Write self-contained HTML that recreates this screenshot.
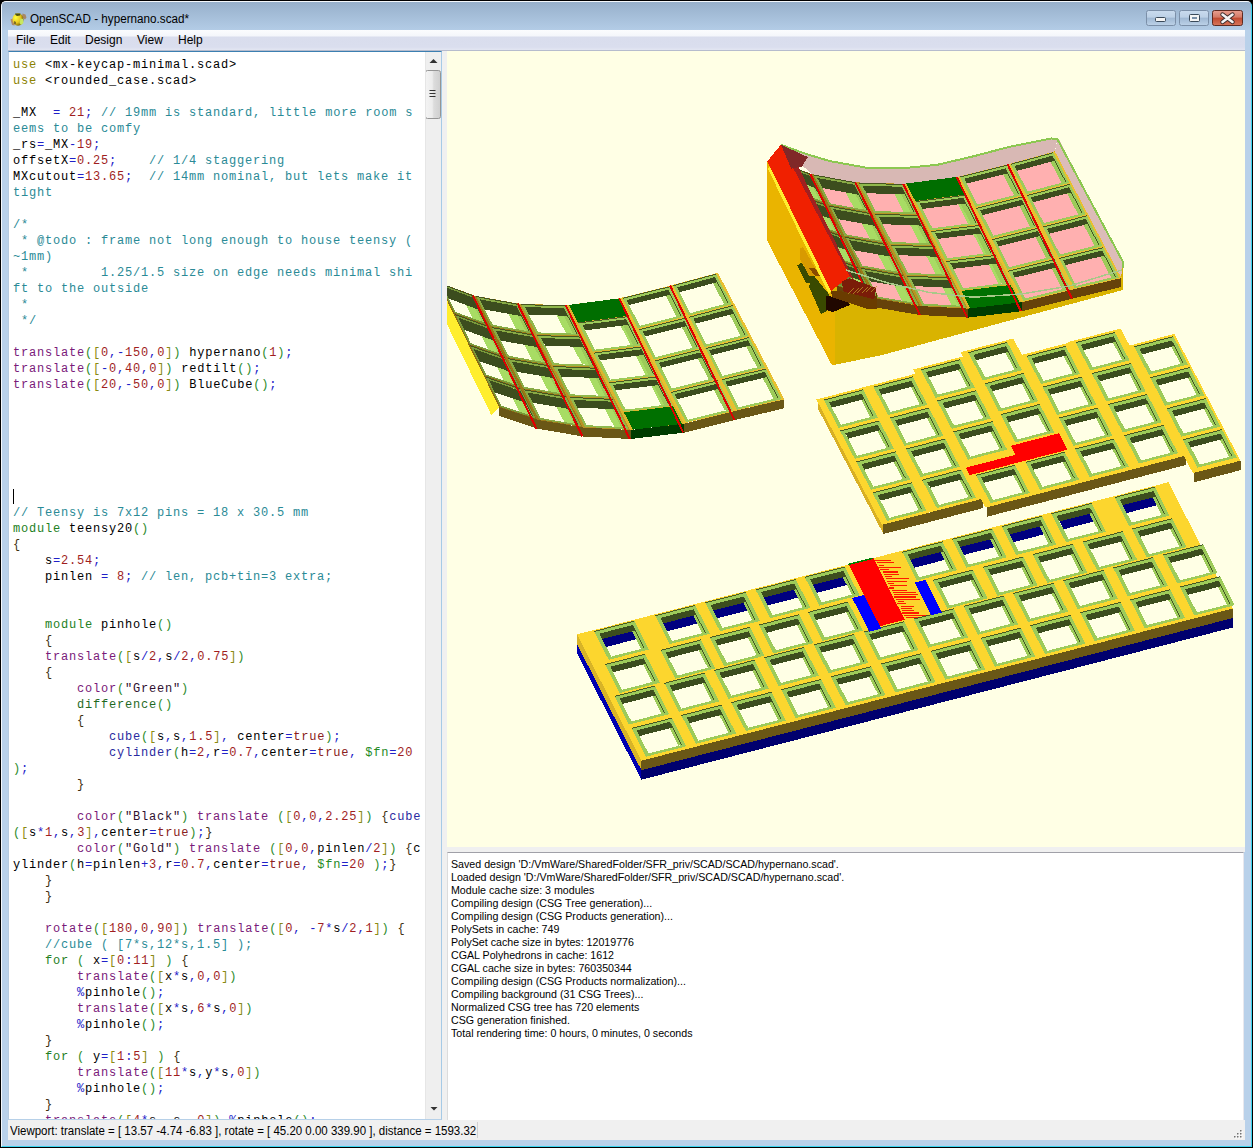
<!DOCTYPE html>
<html><head><meta charset="utf-8"><style>
*{margin:0;padding:0;box-sizing:border-box}
html,body{width:1253px;height:1148px;overflow:hidden;background:#000}
body{position:relative;font-family:"Liberation Sans",sans-serif}
.abs{position:absolute}
#frame{left:1px;top:1px;width:1251px;height:1146px;background:#b9d1ea;border-radius:5px 5px 0 0;border-right:1px solid #3ad4f0;border-bottom:1px solid #3ad4f0;border-left:1px solid #f4f8fc;border-top:1px solid #f4f8fc}
#title{left:2px;top:2px;width:1249px;height:28px;background:linear-gradient(#97b0cb,#b3cce6);border-radius:4px 4px 0 0}
#ttext{left:30px;top:12px;font-size:12.5px;color:#000;white-space:pre;transform:scaleX(0.934);transform-origin:0 0}
#menu{left:8px;top:30px;width:1237px;height:20px;background:linear-gradient(#fbfcfe 0,#f4f6fb 30%,#d9dded 35%,#dadeee 85%,#e3e6f2 100%)}
.mi{position:absolute;top:3px;font-size:12px;color:#000}
#editor{left:8px;top:51px;width:434px;height:1069px;background:#fff;border-top:1px solid #3c7fb1;border-left:1px solid #b6cbe0;border-right:1px solid #a6cae6;border-bottom:1px solid #b6d0e8;overflow:hidden}
#code{left:4px;top:5px;width:420px;height:1070px;font-family:"Liberation Mono",monospace;font-size:12px;letter-spacing:0.8px;color:#000}
.ln{position:absolute;left:0;height:16px;line-height:16px;white-space:pre}
.cur{display:inline-block;width:1px;height:15px;background:#000;vertical-align:top;margin-top:0}
#vsb{left:416px;top:0px;width:17px;height:1067px;background:#efefef;border-left:1px solid #e6e6e6}
#split{left:442px;top:51px;width:5px;height:1069px;background:#f0f0f0}
#view{left:447px;top:51px;width:798px;height:796px;background:#ffffe5;overflow:hidden}
#gap{left:447px;top:847px;width:798px;height:5px;background:#f0f0f0}
#console{left:447px;top:852px;width:797px;height:268px;background:#fff;border-top:1px solid #a0a0a8;border-left:1px solid #dcdcdc;border-right:1px solid #e8e8ee}
#ctext{left:3px;top:5px;font-size:11.5px;color:#000;transform:scaleX(0.926);transform-origin:0 0}
.cl{position:absolute;left:0;white-space:pre;line-height:13px;height:13px}
#status{left:8px;top:1120px;width:1237px;height:20px;background:#f0f0f0}
#stext{left:2px;top:4px;font-size:12px;white-space:pre;transform:scaleX(0.957);transform-origin:0 0}
</style></head><body>
<div class="abs" id="frame"></div>
<div class="abs" id="title"></div>
<div class="abs" id="ticon" style="left:10px;top:12px;width:17px;height:13px">
<svg width="17" height="13" viewBox="0 0 17 13"><defs><radialGradient id="ig" cx=".3" cy=".35" r=".7"><stop offset="0" stop-color="#ffff40"/><stop offset=".6" stop-color="#e8c820"/><stop offset="1" stop-color="#806800"/></radialGradient></defs>
<path d="M0.5 6.5 L3 5.5 L5 8 L4.5 12.5 L2 12 Z" fill="#b08a68"/>
<path d="M12.5 0.5 L15.5 1.5 L16.5 4.5 L15 6.5 L12 4 Z" fill="#a88868"/>
<ellipse cx="8" cy="6.5" rx="5.5" ry="6.2" fill="url(#ig)"/>
<path d="M5 0.5 L10.5 0.5 L10 2.5 L7 3 L5.5 2 Z" fill="#4a5010"/>
<path d="M10.5 5.5 L13 6 L13.5 10 L11 12 L9.5 10 Z" fill="#c8e860"/>
<path d="M4 8 L6 9 L6 11 L4 11 Z" fill="#807020"/>
</svg>
</div>
<div class="abs" id="ttext">OpenSCAD - hypernano.scad*</div>
<!-- caption buttons -->
<svg class="abs" style="left:1145px;top:9px" width="100" height="19" viewBox="0 0 100 19">
<defs>
<linearGradient id="gb" x1="0" y1="0" x2="0" y2="1"><stop offset="0" stop-color="#c9dbee"/><stop offset=".45" stop-color="#bcd0e6"/><stop offset=".5" stop-color="#9fb8d3"/><stop offset="1" stop-color="#bdd2e8"/></linearGradient>
<linearGradient id="gr" x1="0" y1="0" x2="0" y2="1"><stop offset="0" stop-color="#e8a090"/><stop offset=".45" stop-color="#d47a66"/><stop offset=".5" stop-color="#c04a30"/><stop offset="1" stop-color="#d8765a"/></linearGradient>
</defs>
<rect x="1.5" y="1.5" width="29" height="15" rx="2" fill="url(#gb)" stroke="#7b8fa8"/>
<rect x="10.5" y="8.5" width="10" height="4" rx="1" fill="#f4f4f4" stroke="#3a4a5a"/>
<rect x="34.5" y="1.5" width="29" height="15" rx="2" fill="url(#gb)" stroke="#7b8fa8"/>
<rect x="44.5" y="5.5" width="10" height="7" rx="1" fill="#f4f4f4" stroke="#3a4a5a"/><rect x="47" y="8" width="5" height="2" fill="#7a90a8"/>
<rect x="67.5" y="1.5" width="30" height="15" rx="2" fill="url(#gr)" stroke="#5e2a20"/>
<path d="M77.5 5.5 L87.5 13 M87.5 5.5 L77.5 13" stroke="#3a2a2a" stroke-width="4.4" stroke-linecap="round"/>
<path d="M77.5 5.5 L87.5 13 M87.5 5.5 L77.5 13" stroke="#f4f4f4" stroke-width="2.6" stroke-linecap="round"/>
</svg>
<div class="abs" id="menu">
<span class="mi" style="left:8px">File</span>
<span class="mi" style="left:42px">Edit</span>
<span class="mi" style="left:77px">Design</span>
<span class="mi" style="left:129px">View</span>
<span class="mi" style="left:170px">Help</span>
</div>
<div class="abs" id="editor">
<div class="abs" id="code">
<div class="ln" style="top:0px"><span style="color:#8c8200">use</span> &lt;mx-keycap-minimal.scad&gt;</div>
<div class="ln" style="top:16px"><span style="color:#8c8200">use</span> &lt;rounded_case.scad&gt;</div>
<div class="ln" style="top:32px"></div>
<div class="ln" style="top:48px">_MX  <span style="color:#2020c8">=</span> <span style="color:#a01e1e">21</span><span style="color:#2020c8">;</span> <span style="color:#2a8a96">// 19mm is standard, little more room s</span></div>
<div class="ln" style="top:64px"><span style="color:#2a8a96">eems to be comfy</span></div>
<div class="ln" style="top:80px">_rs<span style="color:#2020c8">=</span>_MX<span style="color:#2020c8">-</span><span style="color:#a01e1e">19</span><span style="color:#2020c8">;</span></div>
<div class="ln" style="top:96px">offsetX<span style="color:#2020c8">=</span><span style="color:#a01e1e">0.25</span><span style="color:#2020c8">;</span>    <span style="color:#2a8a96">// 1/4 staggering</span></div>
<div class="ln" style="top:112px">MXcutout<span style="color:#2020c8">=</span><span style="color:#a01e1e">13.65</span><span style="color:#2020c8">;</span>  <span style="color:#2a8a96">// 14mm nominal, but lets make it</span></div>
<div class="ln" style="top:128px"><span style="color:#2a8a96">tight</span></div>
<div class="ln" style="top:144px"></div>
<div class="ln" style="top:160px"><span style="color:#2a8a96">/*</span></div>
<div class="ln" style="top:176px"><span style="color:#2a8a96"> * @todo : frame not long enough to house teensy (</span></div>
<div class="ln" style="top:192px"><span style="color:#2a8a96">~1mm)</span></div>
<div class="ln" style="top:208px"><span style="color:#2a8a96"> *         1.25/1.5 size on edge needs minimal shi</span></div>
<div class="ln" style="top:224px"><span style="color:#2a8a96">ft to the outside</span></div>
<div class="ln" style="top:240px"><span style="color:#2a8a96"> *</span></div>
<div class="ln" style="top:256px"><span style="color:#2a8a96"> */</span></div>
<div class="ln" style="top:272px"></div>
<div class="ln" style="top:288px"><span style="color:#7a1a7a">translate</span><span style="color:#2a8a2a">(</span><span style="color:#8a8a10">[</span><span style="color:#a01e1e">0</span><span style="color:#2020c8">,</span><span style="color:#2020c8">-</span><span style="color:#a01e1e">150</span><span style="color:#2020c8">,</span><span style="color:#a01e1e">0</span><span style="color:#8a8a10">]</span><span style="color:#2a8a2a">)</span> hypernano<span style="color:#2a8a2a">(</span><span style="color:#a01e1e">1</span><span style="color:#2a8a2a">)</span><span style="color:#2020c8">;</span></div>
<div class="ln" style="top:304px"><span style="color:#7a1a7a">translate</span><span style="color:#2a8a2a">(</span><span style="color:#8a8a10">[</span><span style="color:#2020c8">-</span><span style="color:#a01e1e">0</span><span style="color:#2020c8">,</span><span style="color:#a01e1e">40</span><span style="color:#2020c8">,</span><span style="color:#a01e1e">0</span><span style="color:#8a8a10">]</span><span style="color:#2a8a2a">)</span> redtilt<span style="color:#2a8a2a">(</span><span style="color:#2a8a2a">)</span><span style="color:#2020c8">;</span></div>
<div class="ln" style="top:320px"><span style="color:#7a1a7a">translate</span><span style="color:#2a8a2a">(</span><span style="color:#8a8a10">[</span><span style="color:#a01e1e">20</span><span style="color:#2020c8">,</span><span style="color:#2020c8">-</span><span style="color:#a01e1e">50</span><span style="color:#2020c8">,</span><span style="color:#a01e1e">0</span><span style="color:#8a8a10">]</span><span style="color:#2a8a2a">)</span> BlueCube<span style="color:#2a8a2a">(</span><span style="color:#2a8a2a">)</span><span style="color:#2020c8">;</span></div>
<div class="ln" style="top:336px"></div>
<div class="ln" style="top:352px"></div>
<div class="ln" style="top:368px"></div>
<div class="ln" style="top:384px"></div>
<div class="ln" style="top:400px"></div>
<div class="ln" style="top:416px"></div>
<div class="ln" style="top:432px"><span class="cur"></span></div>
<div class="ln" style="top:448px"><span style="color:#2a8a96">// Teensy is 7x12 pins = 18 x 30.5 mm</span></div>
<div class="ln" style="top:464px"><span style="color:#238023">module</span> teensy20<span style="color:#2a8a2a">(</span><span style="color:#2a8a2a">)</span></div>
<div class="ln" style="top:480px"><span style="color:#403010">{</span></div>
<div class="ln" style="top:496px">    s<span style="color:#2020c8">=</span><span style="color:#a01e1e">2.54</span><span style="color:#2020c8">;</span></div>
<div class="ln" style="top:512px">    pinlen <span style="color:#2020c8">=</span> <span style="color:#a01e1e">8</span><span style="color:#2020c8">;</span> <span style="color:#2a8a96">// len, pcb+tin=3 extra;</span></div>
<div class="ln" style="top:528px"></div>
<div class="ln" style="top:544px"></div>
<div class="ln" style="top:560px">    <span style="color:#238023">module</span> pinhole<span style="color:#2a8a2a">(</span><span style="color:#2a8a2a">)</span></div>
<div class="ln" style="top:576px">    <span style="color:#403010">{</span></div>
<div class="ln" style="top:592px">    <span style="color:#7a1a7a">translate</span><span style="color:#2a8a2a">(</span><span style="color:#8a8a10">[</span>s<span style="color:#2020c8">/</span><span style="color:#a01e1e">2</span><span style="color:#2020c8">,</span>s<span style="color:#2020c8">/</span><span style="color:#a01e1e">2</span><span style="color:#2020c8">,</span><span style="color:#a01e1e">0.75</span><span style="color:#8a8a10">]</span><span style="color:#2a8a2a">)</span></div>
<div class="ln" style="top:608px">    <span style="color:#403010">{</span></div>
<div class="ln" style="top:624px">        <span style="color:#7a1a7a">color</span><span style="color:#2a8a2a">(</span><span style="color:#301030">&quot;Green&quot;</span><span style="color:#2a8a2a">)</span></div>
<div class="ln" style="top:640px">        <span style="color:#1f6a1f">difference</span><span style="color:#2a8a2a">(</span><span style="color:#2a8a2a">)</span></div>
<div class="ln" style="top:656px">        <span style="color:#403010">{</span></div>
<div class="ln" style="top:672px">            <span style="color:#2a2aa0">cube</span><span style="color:#2a8a2a">(</span><span style="color:#8a8a10">[</span>s<span style="color:#2020c8">,</span>s<span style="color:#2020c8">,</span><span style="color:#a01e1e">1.5</span><span style="color:#8a8a10">]</span><span style="color:#2020c8">,</span> center<span style="color:#2020c8">=</span><span style="color:#8a2020">true</span><span style="color:#2a8a2a">)</span><span style="color:#2020c8">;</span></div>
<div class="ln" style="top:688px">            <span style="color:#2a2aa0">cylinder</span><span style="color:#2a8a2a">(</span>h<span style="color:#2020c8">=</span><span style="color:#a01e1e">2</span><span style="color:#2020c8">,</span>r<span style="color:#2020c8">=</span><span style="color:#a01e1e">0.7</span><span style="color:#2020c8">,</span>center<span style="color:#2020c8">=</span><span style="color:#8a2020">true</span><span style="color:#2020c8">,</span> <span style="color:#248a24">$fn</span><span style="color:#2020c8">=</span><span style="color:#a01e1e">20</span></div>
<div class="ln" style="top:704px"><span style="color:#2a8a2a">)</span><span style="color:#2020c8">;</span></div>
<div class="ln" style="top:720px">        <span style="color:#403010">}</span></div>
<div class="ln" style="top:736px"></div>
<div class="ln" style="top:752px">        <span style="color:#7a1a7a">color</span><span style="color:#2a8a2a">(</span><span style="color:#301030">&quot;Black&quot;</span><span style="color:#2a8a2a">)</span> <span style="color:#7a1a7a">translate</span> <span style="color:#2a8a2a">(</span><span style="color:#8a8a10">[</span><span style="color:#a01e1e">0</span><span style="color:#2020c8">,</span><span style="color:#a01e1e">0</span><span style="color:#2020c8">,</span><span style="color:#a01e1e">2.25</span><span style="color:#8a8a10">]</span><span style="color:#2a8a2a">)</span> <span style="color:#403010">{</span><span style="color:#2a2aa0">cube</span></div>
<div class="ln" style="top:768px"><span style="color:#2a8a2a">(</span><span style="color:#8a8a10">[</span>s<span style="color:#2020c8">*</span><span style="color:#a01e1e">1</span><span style="color:#2020c8">,</span>s<span style="color:#2020c8">,</span><span style="color:#a01e1e">3</span><span style="color:#8a8a10">]</span><span style="color:#2020c8">,</span>center<span style="color:#2020c8">=</span><span style="color:#8a2020">true</span><span style="color:#2a8a2a">)</span><span style="color:#2020c8">;</span><span style="color:#403010">}</span></div>
<div class="ln" style="top:784px">        <span style="color:#7a1a7a">color</span><span style="color:#2a8a2a">(</span><span style="color:#301030">&quot;Gold&quot;</span><span style="color:#2a8a2a">)</span> <span style="color:#7a1a7a">translate</span> <span style="color:#2a8a2a">(</span><span style="color:#8a8a10">[</span><span style="color:#a01e1e">0</span><span style="color:#2020c8">,</span><span style="color:#a01e1e">0</span><span style="color:#2020c8">,</span>pinlen<span style="color:#2020c8">/</span><span style="color:#a01e1e">2</span><span style="color:#8a8a10">]</span><span style="color:#2a8a2a">)</span> <span style="color:#403010">{</span>c</div>
<div class="ln" style="top:800px">ylinder<span style="color:#2a8a2a">(</span>h<span style="color:#2020c8">=</span>pinlen<span style="color:#2020c8">+</span><span style="color:#a01e1e">3</span><span style="color:#2020c8">,</span>r<span style="color:#2020c8">=</span><span style="color:#a01e1e">0.7</span><span style="color:#2020c8">,</span>center<span style="color:#2020c8">=</span><span style="color:#8a2020">true</span><span style="color:#2020c8">,</span> <span style="color:#248a24">$fn</span><span style="color:#2020c8">=</span><span style="color:#a01e1e">20</span> <span style="color:#2a8a2a">)</span><span style="color:#2020c8">;</span><span style="color:#403010">}</span></div>
<div class="ln" style="top:816px">    <span style="color:#403010">}</span></div>
<div class="ln" style="top:832px">    <span style="color:#403010">}</span></div>
<div class="ln" style="top:848px"></div>
<div class="ln" style="top:864px">    <span style="color:#7a1a7a">rotate</span><span style="color:#2a8a2a">(</span><span style="color:#8a8a10">[</span><span style="color:#a01e1e">180</span><span style="color:#2020c8">,</span><span style="color:#a01e1e">0</span><span style="color:#2020c8">,</span><span style="color:#a01e1e">90</span><span style="color:#8a8a10">]</span><span style="color:#2a8a2a">)</span> <span style="color:#7a1a7a">translate</span><span style="color:#2a8a2a">(</span><span style="color:#8a8a10">[</span><span style="color:#a01e1e">0</span><span style="color:#2020c8">,</span> <span style="color:#2020c8">-</span><span style="color:#a01e1e">7</span><span style="color:#2020c8">*</span>s<span style="color:#2020c8">/</span><span style="color:#a01e1e">2</span><span style="color:#2020c8">,</span><span style="color:#a01e1e">1</span><span style="color:#8a8a10">]</span><span style="color:#2a8a2a">)</span> <span style="color:#403010">{</span></div>
<div class="ln" style="top:880px">    <span style="color:#2a8a96">//cube ( [7*s,12*s,1.5] );</span></div>
<div class="ln" style="top:896px">    <span style="color:#238023">for</span> <span style="color:#2a8a2a">(</span> x<span style="color:#2020c8">=</span><span style="color:#8a8a10">[</span><span style="color:#a01e1e">0</span><span style="color:#2020c8">:</span><span style="color:#a01e1e">11</span><span style="color:#8a8a10">]</span> <span style="color:#2a8a2a">)</span> <span style="color:#403010">{</span></div>
<div class="ln" style="top:912px">        <span style="color:#7a1a7a">translate</span><span style="color:#2a8a2a">(</span><span style="color:#8a8a10">[</span>x<span style="color:#2020c8">*</span>s<span style="color:#2020c8">,</span><span style="color:#a01e1e">0</span><span style="color:#2020c8">,</span><span style="color:#a01e1e">0</span><span style="color:#8a8a10">]</span><span style="color:#2a8a2a">)</span></div>
<div class="ln" style="top:928px">        <span style="color:#2020c8">%</span>pinhole<span style="color:#2a8a2a">(</span><span style="color:#2a8a2a">)</span><span style="color:#2020c8">;</span></div>
<div class="ln" style="top:944px">        <span style="color:#7a1a7a">translate</span><span style="color:#2a8a2a">(</span><span style="color:#8a8a10">[</span>x<span style="color:#2020c8">*</span>s<span style="color:#2020c8">,</span><span style="color:#a01e1e">6</span><span style="color:#2020c8">*</span>s<span style="color:#2020c8">,</span><span style="color:#a01e1e">0</span><span style="color:#8a8a10">]</span><span style="color:#2a8a2a">)</span></div>
<div class="ln" style="top:960px">        <span style="color:#2020c8">%</span>pinhole<span style="color:#2a8a2a">(</span><span style="color:#2a8a2a">)</span><span style="color:#2020c8">;</span></div>
<div class="ln" style="top:976px">    <span style="color:#403010">}</span></div>
<div class="ln" style="top:992px">    <span style="color:#238023">for</span> <span style="color:#2a8a2a">(</span> y<span style="color:#2020c8">=</span><span style="color:#8a8a10">[</span><span style="color:#a01e1e">1</span><span style="color:#2020c8">:</span><span style="color:#a01e1e">5</span><span style="color:#8a8a10">]</span> <span style="color:#2a8a2a">)</span> <span style="color:#403010">{</span></div>
<div class="ln" style="top:1008px">        <span style="color:#7a1a7a">translate</span><span style="color:#2a8a2a">(</span><span style="color:#8a8a10">[</span><span style="color:#a01e1e">11</span><span style="color:#2020c8">*</span>s<span style="color:#2020c8">,</span>y<span style="color:#2020c8">*</span>s<span style="color:#2020c8">,</span><span style="color:#a01e1e">0</span><span style="color:#8a8a10">]</span><span style="color:#2a8a2a">)</span></div>
<div class="ln" style="top:1024px">        <span style="color:#2020c8">%</span>pinhole<span style="color:#2a8a2a">(</span><span style="color:#2a8a2a">)</span><span style="color:#2020c8">;</span></div>
<div class="ln" style="top:1040px">    <span style="color:#403010">}</span></div>
<div class="ln" style="top:1056px">    <span style="color:#7a1a7a">translate</span><span style="color:#2a8a2a">(</span><span style="color:#8a8a10">[</span><span style="color:#a01e1e">4</span><span style="color:#2020c8">*</span>s<span style="color:#2020c8">,</span> s<span style="color:#2020c8">,</span> <span style="color:#a01e1e">0</span><span style="color:#8a8a10">]</span><span style="color:#2a8a2a">)</span> <span style="color:#2020c8">%</span>pinhole<span style="color:#2a8a2a">(</span><span style="color:#2a8a2a">)</span><span style="color:#2020c8">;</span></div>
</div>
<div class="abs" id="vsb">
<svg class="abs" style="left:0;top:0" width="16" height="1067" viewBox="0 0 16 1067">
<path d="M3.5 11 L7.5 7 L11.5 11 Z" fill="#333"/>
<defs><linearGradient id="thumb" x1="0" y1="0" x2="1" y2="0"><stop offset="0" stop-color="#f4f4f4"/><stop offset=".45" stop-color="#ececec"/><stop offset=".55" stop-color="#dcdcdc"/><stop offset="1" stop-color="#cfcfcf"/></linearGradient></defs>
<rect x="-0.5" y="18.5" width="15" height="48" rx="2" fill="url(#thumb)" stroke="#959595"/>
<path d="M3.5 38.5h6M3.5 41.5h6M3.5 44.5h6" stroke="#333" stroke-width="1.2"/>
<path d="M4.5 1055 L8 1058.5 L11.5 1055 Z" fill="#333"/>
</svg>
</div>
</div>
<div class="abs" id="split"></div>
<div class="abs" style="left:8px;top:50px;width:1237px;height:1px;background:#b6bccd"></div>
<div class="abs" id="view">
<svg class="abs" style="left:0;top:0" width="798" height="796" viewBox="447 51 798 796" shape-rendering="crispEdges"><polygon points="767.3,161.3 767.3,241.0 832.0,365.4 882.0,355.0 1123.0,290.0 1123.0,266.0 1054.9,151.4 1008.5,164.1 957.7,176.8 904.2,183.8 856.3,182.4 811.3,174.0 775.5,160.6" fill="#d9b300"/><polygon points="767.3,161.3 767.3,241.0 832.0,365.4 835.0,365.4 835.0,303.0 831.0,290.9" fill="#eab400"/><polygon points="797.2,265.4 801.5,262.9 810.0,275.1 812.4,273.9 828.3,293.4 832.0,308.0 821.0,314.1 808.8,286.1 811.2,283.7 805.7,282.4" fill="#3a4a00"/><polygon points="799.6,249.0 803.0,247.0 815.0,268.0 814.9,275.4 809.0,276.0 799.6,258.0" fill="#d89a00"/><polygon points="809.0,268.0 815.0,268.0 820.0,276.0 815.0,276.0" fill="#8a4a00"/><polygon points="826.0,296.0 845.0,298.0 850.0,305.0 833.0,312.0 826.0,310.0" fill="#200800"/><polygon points="836.5,285.6 875.0,298.4 875.0,307.4 836.5,294.6" fill="#66420a"/><polygon points="875.0,298.4 920.9,306.1 920.9,315.1 875.0,307.4" fill="#66420a"/><polygon points="920.9,306.1 968.2,308.6 968.2,317.6 920.9,315.1" fill="#66420a"/><polygon points="968.2,308.6 1021.8,302.2 1021.8,311.2 968.2,317.6" fill="#003c00"/><polygon points="1021.8,302.2 1072.9,289.5 1072.9,298.5 1021.8,311.2" fill="#66420a"/><polygon points="1072.9,289.5 1121.4,278.0 1121.4,287.0 1072.9,298.5" fill="#66420a"/><polygon points="775.0,160.6 811.8,174.0 875.5,298.4 836.0,285.6" fill="#8a6a14"/><polygon points="810.8,174.0 856.8,182.4 921.4,306.1 874.5,298.4" fill="#9a7a18"/><polygon points="855.8,182.4 904.7,183.8 968.7,308.6 920.4,306.1" fill="#b89424"/><polygon points="903.7,183.8 958.2,176.8 1022.3,302.2 967.7,308.6" fill="#dcb42c"/><polygon points="957.2,176.8 1009.0,164.1 1073.4,289.5 1021.3,302.2" fill="#e8c030"/><polygon points="1008.0,164.1 1055.4,151.4 1121.9,278.0 1072.4,289.5" fill="#e8c030"/><polygon points="777.3,161.9 810.2,174.2 825.4,203.8 791.8,191.6" fill="#7a9a3a"/><polygon points="780.4,165.0 809.5,175.8 822.5,201.3 793.0,190.6" fill="#6a8a30"/><polygon points="797.3,171.3 806.6,174.8 819.5,200.2 810.1,196.8" fill="#a8dc64"/><polygon points="806.6,174.8 809.5,175.8 822.5,201.3 819.5,200.2" fill="#9dcb5a"/><polygon points="780.4,165.0 809.5,175.8 815.7,188.1 786.5,177.3" fill="#3c4d1e"/><line x1="809.5" y1="175.8" x2="822.5" y2="201.3" stroke="#3c4d1e" stroke-width="0.9"/><line x1="777.3" y1="161.9" x2="810.2" y2="174.2" stroke="#3c4d1e" stroke-width="0.9"/><polygon points="792.6,193.1 826.1,205.3 841.3,234.9 807.1,222.9" fill="#7a9a3a"/><polygon points="795.8,196.2 825.3,207.0 838.3,232.4 808.3,221.8" fill="#6a8a30"/><polygon points="812.9,202.5 822.4,205.9 835.3,231.4 825.7,228.0" fill="#a8dc64"/><polygon points="822.4,205.9 825.3,207.0 838.3,232.4 835.3,231.4" fill="#9dcb5a"/><polygon points="795.8,196.2 825.3,207.0 831.6,219.2 801.8,208.5" fill="#3c4d1e"/><line x1="825.3" y1="207.0" x2="838.3" y2="232.4" stroke="#3c4d1e" stroke-width="0.9"/><line x1="792.6" y1="193.1" x2="826.1" y2="205.3" stroke="#3c4d1e" stroke-width="0.9"/><polygon points="807.9,224.4 842.0,236.4 857.2,266.0 822.4,254.1" fill="#7a9a3a"/><polygon points="811.1,227.5 841.2,238.1 854.2,263.5 823.6,253.0" fill="#6a8a30"/><polygon points="828.5,233.6 838.2,237.0 851.1,262.5 841.3,259.1" fill="#a8dc64"/><polygon points="838.2,237.0 841.2,238.1 854.2,263.5 851.1,262.5" fill="#9dcb5a"/><polygon points="811.1,227.5 841.2,238.1 847.4,250.3 817.1,239.8" fill="#3c4d1e"/><line x1="841.2" y1="238.1" x2="854.2" y2="263.5" stroke="#3c4d1e" stroke-width="0.9"/><line x1="807.9" y1="224.4" x2="842.0" y2="236.4" stroke="#3c4d1e" stroke-width="0.9"/><polygon points="823.1,255.6 857.9,267.5 873.1,297.1 837.7,285.4" fill="#7a9a3a"/><polygon points="826.4,258.7 857.1,269.2 870.0,294.7 838.9,284.3" fill="#6a8a30"/><polygon points="844.2,264.8 854.0,268.1 866.9,293.6 857.0,290.3" fill="#a8dc64"/><polygon points="854.0,268.1 857.1,269.2 870.0,294.7 866.9,293.6" fill="#9dcb5a"/><polygon points="826.4,258.7 857.1,269.2 863.3,281.4 832.4,271.0" fill="#3c4d1e"/><line x1="857.1" y1="269.2" x2="870.0" y2="294.7" stroke="#3c4d1e" stroke-width="0.9"/><line x1="823.1" y1="255.6" x2="857.9" y2="267.5" stroke="#3c4d1e" stroke-width="0.9"/><polygon points="813.5,175.1 854.9,182.8 870.3,212.3 828.7,204.7" fill="#88aa44"/><polygon points="817.2,177.9 853.6,184.7 866.8,210.0 830.2,203.4" fill="#ffb0b0"/><polygon points="840.5,182.3 850.0,184.0 863.2,209.4 853.7,207.6" fill="#a8dc64"/><polygon points="850.0,184.0 853.6,184.7 866.8,210.0 863.2,209.4" fill="#9dcb5a"/><polygon points="817.2,177.9 853.6,184.7 858.9,194.8 822.4,188.1" fill="#3c4d1e"/><line x1="853.6" y1="184.7" x2="866.8" y2="210.0" stroke="#3c4d1e" stroke-width="0.9"/><line x1="813.5" y1="175.1" x2="854.9" y2="182.8" stroke="#3c4d1e" stroke-width="0.9"/><polygon points="829.4,206.2 871.0,213.7 886.4,243.2 844.6,235.8" fill="#88aa44"/><polygon points="833.1,209.0 869.8,215.6 883.0,241.0 846.2,234.4" fill="#ffb0b0"/><polygon points="856.6,213.2 866.1,215.0 879.3,240.3 869.7,238.6" fill="#a8dc64"/><polygon points="866.1,215.0 869.8,215.6 883.0,241.0 879.3,240.3" fill="#9dcb5a"/><polygon points="833.1,209.0 869.8,215.6 875.0,225.8 838.3,219.2" fill="#3c4d1e"/><line x1="869.8" y1="215.6" x2="883.0" y2="241.0" stroke="#3c4d1e" stroke-width="0.9"/><line x1="829.4" y1="206.2" x2="871.0" y2="213.7" stroke="#3c4d1e" stroke-width="0.9"/><polygon points="845.4,237.3 887.2,244.7 902.5,274.1 860.5,266.9" fill="#88aa44"/><polygon points="849.1,240.1 885.9,246.6 899.1,271.9 862.1,265.5" fill="#ffb0b0"/><polygon points="872.6,244.2 882.2,245.9 895.4,271.3 885.8,269.6" fill="#a8dc64"/><polygon points="882.2,245.9 885.9,246.6 899.1,271.9 895.4,271.3" fill="#9dcb5a"/><polygon points="849.1,240.1 885.9,246.6 891.2,256.7 854.3,250.3" fill="#3c4d1e"/><line x1="885.9" y1="246.6" x2="899.1" y2="271.9" stroke="#3c4d1e" stroke-width="0.9"/><line x1="845.4" y1="237.3" x2="887.2" y2="244.7" stroke="#3c4d1e" stroke-width="0.9"/><polygon points="861.3,268.4 903.3,275.6 918.7,305.0 876.5,298.0" fill="#88aa44"/><polygon points="865.0,271.2 902.0,277.5 915.2,302.9 878.1,296.6" fill="#ffb0b0"/><polygon points="888.7,275.2 898.3,276.9 911.5,302.2 901.8,300.6" fill="#a8dc64"/><polygon points="898.3,276.9 902.0,277.5 915.2,302.9 911.5,302.2" fill="#9dcb5a"/><polygon points="865.0,271.2 902.0,277.5 907.3,287.7 870.2,281.3" fill="#3c4d1e"/><line x1="902.0" y1="277.5" x2="915.2" y2="302.9" stroke="#3c4d1e" stroke-width="0.9"/><line x1="861.3" y1="268.4" x2="903.3" y2="275.6" stroke="#3c4d1e" stroke-width="0.9"/><polygon points="858.6,183.2 902.7,184.5 917.9,214.2 874.0,212.6" fill="#90b84c"/><polygon points="862.5,185.6 901.2,186.8 914.4,212.3 875.7,211.0" fill="#ffb0b0"/><polygon points="890.4,186.5 897.4,186.7 910.5,212.2 903.5,211.9" fill="#a8dc64"/><polygon points="897.4,186.7 901.2,186.8 914.4,212.3 910.5,212.2" fill="#9dcb5a"/><polygon points="862.5,185.6 901.2,186.8 905.2,194.4 866.4,193.2" fill="#3c4d1e"/><line x1="901.2" y1="186.8" x2="914.4" y2="212.3" stroke="#3c4d1e" stroke-width="0.9"/><line x1="858.6" y1="183.2" x2="902.7" y2="184.5" stroke="#3c4d1e" stroke-width="0.9"/><polygon points="874.7,214.1 918.7,215.7 933.9,245.4 890.1,243.6" fill="#90b84c"/><polygon points="878.6,216.6 917.3,218.0 930.4,243.5 891.8,241.9" fill="#ffb0b0"/><polygon points="906.4,217.6 913.4,217.8 926.5,243.3 919.6,243.0" fill="#a8dc64"/><polygon points="913.4,217.8 917.3,218.0 930.4,243.5 926.5,243.3" fill="#9dcb5a"/><polygon points="878.6,216.6 917.3,218.0 921.2,225.6 882.6,224.2" fill="#3c4d1e"/><line x1="917.3" y1="218.0" x2="930.4" y2="243.5" stroke="#3c4d1e" stroke-width="0.9"/><line x1="874.7" y1="214.1" x2="918.7" y2="215.7" stroke="#3c4d1e" stroke-width="0.9"/><polygon points="890.9,245.1 934.7,246.9 949.9,276.6 906.3,274.5" fill="#90b84c"/><polygon points="894.7,247.5 933.3,249.1 946.4,274.7 908.0,272.9" fill="#ffb0b0"/><polygon points="922.5,248.7 929.4,249.0 942.5,274.5 935.6,274.2" fill="#a8dc64"/><polygon points="929.4,249.0 933.3,249.1 946.4,274.7 942.5,274.5" fill="#9dcb5a"/><polygon points="894.7,247.5 933.3,249.1 937.2,256.8 898.7,255.1" fill="#3c4d1e"/><line x1="933.3" y1="249.1" x2="946.4" y2="274.7" stroke="#3c4d1e" stroke-width="0.9"/><line x1="890.9" y1="245.1" x2="934.7" y2="246.9" stroke="#3c4d1e" stroke-width="0.9"/><polygon points="907.0,276.0 950.7,278.1 965.9,307.8 922.4,305.5" fill="#90b84c"/><polygon points="910.9,278.5 949.3,280.3 962.4,305.8 924.1,303.8" fill="#ffb0b0"/><polygon points="938.5,279.8 945.4,280.1 958.6,305.6 951.7,305.3" fill="#a8dc64"/><polygon points="945.4,280.1 949.3,280.3 962.4,305.8 958.6,305.6" fill="#9dcb5a"/><polygon points="910.9,278.5 949.3,280.3 953.2,288.0 914.8,286.1" fill="#3c4d1e"/><line x1="949.3" y1="280.3" x2="962.4" y2="305.8" stroke="#3c4d1e" stroke-width="0.9"/><line x1="907.0" y1="276.0" x2="950.7" y2="278.1" stroke="#3c4d1e" stroke-width="0.9"/><polygon points="906.3,183.5 955.6,177.1 964.5,194.6 915.3,201.0" fill="#006e00"/><polygon points="961.4,290.9 1010.7,284.9 1019.7,302.5 970.3,308.3" fill="#007000"/><polygon points="915.6,201.6 964.9,195.3 979.6,224.1 930.3,230.3" fill="#9dcb5a"/><polygon points="919.8,203.5 963.1,197.9 975.8,222.7 932.4,228.2" fill="#ffb0b0"/><polygon points="955.3,199.0 957.9,198.6 970.6,223.4 968.0,223.7" fill="#a8dc64"/><polygon points="957.9,198.6 963.1,197.9 975.8,222.7 970.6,223.4" fill="#9dcb5a"/><polygon points="919.8,203.5 963.1,197.9 965.9,203.4 922.5,209.0" fill="#3c4d1e"/><line x1="963.1" y1="197.9" x2="975.8" y2="222.7" stroke="#3c4d1e" stroke-width="0.9"/><line x1="915.6" y1="201.6" x2="964.9" y2="195.3" stroke="#3c4d1e" stroke-width="0.9"/><polygon points="931.0,231.6 980.2,225.3 995.0,254.2 945.7,260.3" fill="#9dcb5a"/><polygon points="935.1,233.5 978.5,228.0 991.1,252.8 947.8,258.2" fill="#ffb0b0"/><polygon points="970.7,229.0 973.3,228.7 985.9,253.5 983.3,253.8" fill="#a8dc64"/><polygon points="973.3,228.7 978.5,228.0 991.1,252.8 985.9,253.5" fill="#9dcb5a"/><polygon points="935.1,233.5 978.5,228.0 981.2,233.5 937.9,238.9" fill="#3c4d1e"/><line x1="978.5" y1="228.0" x2="991.1" y2="252.8" stroke="#3c4d1e" stroke-width="0.9"/><line x1="931.0" y1="231.6" x2="980.2" y2="225.3" stroke="#3c4d1e" stroke-width="0.9"/><polygon points="946.3,261.5 995.6,255.4 1010.4,284.3 961.1,290.2" fill="#9dcb5a"/><polygon points="950.5,263.5 993.8,258.1 1006.5,282.9 963.1,288.2" fill="#ffb0b0"/><polygon points="986.0,259.1 988.6,258.8 1001.3,283.5 998.7,283.9" fill="#a8dc64"/><polygon points="988.6,258.8 993.8,258.1 1006.5,282.9 1001.3,283.5" fill="#9dcb5a"/><polygon points="950.5,263.5 993.8,258.1 996.6,263.6 953.3,268.9" fill="#3c4d1e"/><line x1="993.8" y1="258.1" x2="1006.5" y2="282.9" stroke="#3c4d1e" stroke-width="0.9"/><line x1="946.3" y1="261.5" x2="995.6" y2="255.4" stroke="#3c4d1e" stroke-width="0.9"/><polygon points="960.1,177.0 1006.9,165.4 1022.2,195.2 975.4,206.9" fill="#9dcb5a"/><polygon points="964.1,178.7 1005.3,168.4 1018.5,194.1 977.3,204.4" fill="#ffb0b0"/><polygon points="1000.8,169.6 1005.3,168.4 1018.5,194.1 1013.9,195.2" fill="#9dcb5a"/><polygon points="964.1,178.7 1005.3,168.4 1007.8,173.3 966.6,183.6" fill="#3c4d1e"/><line x1="1005.3" y1="168.4" x2="1018.5" y2="194.1" stroke="#3c4d1e" stroke-width="0.9"/><line x1="960.1" y1="177.0" x2="1006.9" y2="165.4" stroke="#3c4d1e" stroke-width="0.9"/><polygon points="976.1,208.4 1023.0,196.7 1038.3,226.6 991.4,238.2" fill="#9dcb5a"/><polygon points="980.2,210.1 1021.4,199.8 1034.5,225.5 993.3,235.7" fill="#ffb0b0"/><polygon points="1016.8,200.9 1021.4,199.8 1034.5,225.5 1030.0,226.6" fill="#9dcb5a"/><polygon points="980.2,210.1 1021.4,199.8 1023.9,204.7 982.7,215.0" fill="#3c4d1e"/><line x1="1021.4" y1="199.8" x2="1034.5" y2="225.5" stroke="#3c4d1e" stroke-width="0.9"/><line x1="976.1" y1="208.4" x2="1023.0" y2="196.7" stroke="#3c4d1e" stroke-width="0.9"/><polygon points="992.2,239.7 1039.0,228.1 1054.4,257.9 1007.4,269.6" fill="#9dcb5a"/><polygon points="996.2,241.4 1037.5,231.1 1050.6,256.8 1009.3,267.1" fill="#ffb0b0"/><polygon points="1032.9,232.3 1037.5,231.1 1050.6,256.8 1046.1,257.9" fill="#9dcb5a"/><polygon points="996.2,241.4 1037.5,231.1 1040.0,236.0 998.7,246.3" fill="#3c4d1e"/><line x1="1037.5" y1="231.1" x2="1050.6" y2="256.8" stroke="#3c4d1e" stroke-width="0.9"/><line x1="992.2" y1="239.7" x2="1039.0" y2="228.1" stroke="#3c4d1e" stroke-width="0.9"/><polygon points="1008.2,271.1 1055.1,259.4 1070.5,289.3 1023.5,300.9" fill="#9dcb5a"/><polygon points="1012.2,272.8 1053.6,262.5 1066.7,288.2 1025.4,298.4" fill="#ffb0b0"/><polygon points="1049.0,263.6 1053.6,262.5 1066.7,288.2 1062.2,289.3" fill="#9dcb5a"/><polygon points="1012.2,272.8 1053.6,262.5 1056.1,267.4 1014.7,277.7" fill="#3c4d1e"/><line x1="1053.6" y1="262.5" x2="1066.7" y2="288.2" stroke="#3c4d1e" stroke-width="0.9"/><line x1="1008.2" y1="271.1" x2="1055.1" y2="259.4" stroke="#3c4d1e" stroke-width="0.9"/><polygon points="1010.7,164.3 1053.4,152.7 1069.2,182.8 1026.1,194.2" fill="#9dcb5a"/><polygon points="1014.5,166.0 1052.1,155.8 1065.7,181.7 1027.8,191.7" fill="#ffb0b0"/><polygon points="1048.0,156.9 1052.1,155.8 1065.7,181.7 1061.5,182.8" fill="#9dcb5a"/><polygon points="1014.5,166.0 1052.1,155.8 1054.7,160.7 1017.0,170.9" fill="#3c4d1e"/><line x1="1052.1" y1="155.8" x2="1065.7" y2="181.7" stroke="#3c4d1e" stroke-width="0.9"/><line x1="1010.7" y1="164.3" x2="1053.4" y2="152.7" stroke="#3c4d1e" stroke-width="0.9"/><polygon points="1026.9,195.7 1070.0,184.3 1085.9,214.4 1042.2,225.6" fill="#9dcb5a"/><polygon points="1030.7,197.4 1068.7,187.4 1082.3,213.3 1043.9,223.1" fill="#ffb0b0"/><polygon points="1064.5,188.5 1068.7,187.4 1082.3,213.3 1078.1,214.4" fill="#9dcb5a"/><polygon points="1030.7,197.4 1068.7,187.4 1071.3,192.3 1033.2,202.3" fill="#3c4d1e"/><line x1="1068.7" y1="187.4" x2="1082.3" y2="213.3" stroke="#3c4d1e" stroke-width="0.9"/><line x1="1026.9" y1="195.7" x2="1070.0" y2="184.3" stroke="#3c4d1e" stroke-width="0.9"/><polygon points="1043.0,227.1 1086.7,215.9 1102.5,246.1 1058.3,256.9" fill="#9dcb5a"/><polygon points="1046.8,228.8 1085.3,219.0 1098.9,244.9 1060.1,254.5" fill="#ffb0b0"/><polygon points="1081.1,220.1 1085.3,219.0 1098.9,244.9 1094.6,246.0" fill="#9dcb5a"/><polygon points="1046.8,228.8 1085.3,219.0 1087.9,223.9 1049.3,233.7" fill="#3c4d1e"/><line x1="1085.3" y1="219.0" x2="1098.9" y2="244.9" stroke="#3c4d1e" stroke-width="0.9"/><line x1="1043.0" y1="227.1" x2="1086.7" y2="215.9" stroke="#3c4d1e" stroke-width="0.9"/><polygon points="1059.1,258.4 1103.3,247.6 1119.1,277.7 1074.5,288.3" fill="#9dcb5a"/><polygon points="1063.0,260.2 1101.9,250.6 1115.4,276.5 1076.2,285.9" fill="#ffb0b0"/><polygon points="1097.6,251.7 1101.9,250.6 1115.4,276.5 1111.1,277.6" fill="#9dcb5a"/><polygon points="1063.0,260.2 1101.9,250.6 1104.4,255.6 1065.5,265.1" fill="#3c4d1e"/><line x1="1101.9" y1="250.6" x2="1115.4" y2="276.5" stroke="#3c4d1e" stroke-width="0.9"/><line x1="1059.1" y1="258.4" x2="1103.3" y2="247.6" stroke="#3c4d1e" stroke-width="0.9"/><line x1="810.3" y1="174.0" x2="874.0" y2="307.4" stroke="#e00000" stroke-width="2.0"/><line x1="855.3" y1="182.4" x2="919.9" y2="315.1" stroke="#e00000" stroke-width="2.0"/><line x1="903.2" y1="183.8" x2="967.2" y2="317.6" stroke="#e00000" stroke-width="2.0"/><line x1="956.7" y1="176.8" x2="1020.8" y2="311.2" stroke="#e00000" stroke-width="2.0"/><line x1="1007.5" y1="164.1" x2="1071.9" y2="298.5" stroke="#e00000" stroke-width="2.0"/><polygon points="775.5,160.6 836.5,285.6 828.9,293.9 767.9,168.9" fill="#ffee2e"/><polygon points="780.8,144.8 805.9,153.9 829.9,161.1 865.8,167.6 901.7,168.3 937.6,164.7 973.5,156.3 1009.4,146.8 1051.3,138.4 1057.3,139.1 1054.9,151.4 1008.5,164.1 957.7,176.8 904.2,183.8 856.3,182.4 811.3,174.0" fill="#d8b8b4"/><polygon points="1058.0,137.6 1123.0,262.0 1121.0,278.0 1121.4,278.0 1054.9,151.4" fill="#dcbcb8"/><polyline points="780.8,144.8 805.9,153.9 829.9,161.1 865.8,167.6 901.7,168.3 937.6,164.7 973.5,156.3 1009.4,146.8 1051.3,138.4 1057.3,139.1 1123,262 1123,268" fill="none" stroke="#8cc850" stroke-width="2"/><polygon points="780.9,144.6 767.3,161.3 831.0,290.9 849.9,276.3" fill="#f02000"/><polygon points="780.9,144.6 790.0,150.0 855.0,282.0 849.9,276.3" fill="#a02020"/><polygon points="831.0,290.5 843.6,291.7 874.3,299.4 877.0,291.0 877.0,309.0 869.0,309.5 832.0,297.0" fill="#6a3c00"/><polygon points="841.7,281.2 849.4,278.3 876.2,287.9 874.3,299.4 843.6,291.7" fill="#7a1c08"/><line x1="848.0" y1="294.0" x2="854.0" y2="288.0" stroke="#b89028" stroke-width="0.8"/><line x1="852.5" y1="293.5" x2="858.5" y2="287.5" stroke="#b89028" stroke-width="0.8"/><line x1="857.0" y1="293.0" x2="863.0" y2="287.0" stroke="#b89028" stroke-width="0.8"/><line x1="861.5" y1="292.5" x2="867.5" y2="286.5" stroke="#b89028" stroke-width="0.8"/><line x1="866.0" y1="292.0" x2="872.0" y2="286.0" stroke="#b89028" stroke-width="0.8"/><line x1="870.5" y1="291.5" x2="876.5" y2="285.5" stroke="#b89028" stroke-width="0.8"/><polygon points="780.9,144.6 808.0,157.2 801.8,166.6 791.3,168.7" fill="#802828"/><polyline points="1121.9,270.0 1069.2,286.0 1021.3,294.0 973.5,297.2 928.8,292.4 887.3,282.8 845.8,270.0" fill="none" stroke="#a8c888" stroke-width="1.5"/><polygon points="499.0,407.0 537.5,419.8 537.5,428.8 499.0,416.0" fill="#6a5716"/><polygon points="537.5,419.8 583.4,427.5 583.4,436.5 537.5,428.8" fill="#6a5716"/><polygon points="583.4,427.5 630.7,430.0 630.7,439.0 583.4,436.5" fill="#6a5716"/><polygon points="630.7,430.0 684.3,423.6 684.3,432.6 630.7,439.0" fill="#003c00"/><polygon points="684.3,423.6 735.4,410.9 735.4,419.9 684.3,432.6" fill="#6a5716"/><polygon points="735.4,410.9 783.9,399.4 783.9,408.4 735.4,419.9" fill="#6a5716"/><polygon points="437.5,282.0 474.3,295.4 538.0,419.8 498.5,407.0" fill="#8a6a14"/><polygon points="473.3,295.4 519.3,303.8 583.9,427.5 537.0,419.8" fill="#9a7a18"/><polygon points="518.3,303.8 567.2,305.2 631.2,430.0 582.9,427.5" fill="#b89424"/><polygon points="566.2,305.2 620.7,298.2 684.8,423.6 630.2,430.0" fill="#dcb42c"/><polygon points="619.7,298.2 671.5,285.5 735.9,410.9 683.8,423.6" fill="#e8c030"/><polygon points="670.5,285.5 717.9,272.8 784.4,399.4 734.9,410.9" fill="#e8c030"/><polygon points="439.8,283.3 472.7,295.6 487.9,325.2 454.3,313.0" fill="#7a9a3a"/><polygon points="442.9,286.4 472.0,297.2 485.0,322.7 455.5,312.0" fill="#ffffe5"/><polygon points="459.8,292.7 469.1,296.2 482.0,321.6 472.6,318.2" fill="#a8dc64"/><polygon points="469.1,296.2 472.0,297.2 485.0,322.7 482.0,321.6" fill="#9dcb5a"/><polygon points="442.9,286.4 472.0,297.2 478.2,309.5 449.0,298.7" fill="#3c4d1e"/><line x1="472.0" y1="297.2" x2="485.0" y2="322.7" stroke="#3c4d1e" stroke-width="0.9"/><line x1="439.8" y1="283.3" x2="472.7" y2="295.6" stroke="#3c4d1e" stroke-width="0.9"/><polygon points="455.1,314.5 488.6,326.7 503.8,356.3 469.6,344.3" fill="#7a9a3a"/><polygon points="458.3,317.6 487.8,328.4 500.8,353.8 470.8,343.2" fill="#ffffe5"/><polygon points="475.4,323.9 484.9,327.3 497.8,352.8 488.2,349.4" fill="#a8dc64"/><polygon points="484.9,327.3 487.8,328.4 500.8,353.8 497.8,352.8" fill="#9dcb5a"/><polygon points="458.3,317.6 487.8,328.4 494.1,340.6 464.3,329.9" fill="#3c4d1e"/><line x1="487.8" y1="328.4" x2="500.8" y2="353.8" stroke="#3c4d1e" stroke-width="0.9"/><line x1="455.1" y1="314.5" x2="488.6" y2="326.7" stroke="#3c4d1e" stroke-width="0.9"/><polygon points="470.4,345.8 504.5,357.8 519.7,387.4 484.9,375.5" fill="#7a9a3a"/><polygon points="473.6,348.9 503.7,359.5 516.7,384.9 486.1,374.4" fill="#ffffe5"/><polygon points="491.0,355.0 500.7,358.4 513.6,383.9 503.8,380.5" fill="#a8dc64"/><polygon points="500.7,358.4 503.7,359.5 516.7,384.9 513.6,383.9" fill="#9dcb5a"/><polygon points="473.6,348.9 503.7,359.5 509.9,371.7 479.6,361.2" fill="#3c4d1e"/><line x1="503.7" y1="359.5" x2="516.7" y2="384.9" stroke="#3c4d1e" stroke-width="0.9"/><line x1="470.4" y1="345.8" x2="504.5" y2="357.8" stroke="#3c4d1e" stroke-width="0.9"/><polygon points="485.6,377.0 520.4,388.9 535.6,418.5 500.2,406.8" fill="#7a9a3a"/><polygon points="488.9,380.1 519.6,390.6 532.5,416.1 501.4,405.7" fill="#ffffe5"/><polygon points="506.7,386.2 516.5,389.5 529.4,415.0 519.5,411.7" fill="#a8dc64"/><polygon points="516.5,389.5 519.6,390.6 532.5,416.1 529.4,415.0" fill="#9dcb5a"/><polygon points="488.9,380.1 519.6,390.6 525.8,402.8 494.9,392.4" fill="#3c4d1e"/><line x1="519.6" y1="390.6" x2="532.5" y2="416.1" stroke="#3c4d1e" stroke-width="0.9"/><line x1="485.6" y1="377.0" x2="520.4" y2="388.9" stroke="#3c4d1e" stroke-width="0.9"/><polygon points="476.0,296.5 517.4,304.2 532.8,333.7 491.2,326.1" fill="#88aa44"/><polygon points="479.7,299.3 516.1,306.1 529.3,331.4 492.7,324.8" fill="#ffffe5"/><polygon points="503.0,303.7 512.5,305.4 525.7,330.8 516.2,329.0" fill="#a8dc64"/><polygon points="512.5,305.4 516.1,306.1 529.3,331.4 525.7,330.8" fill="#9dcb5a"/><polygon points="479.7,299.3 516.1,306.1 521.4,316.2 484.9,309.5" fill="#3c4d1e"/><line x1="516.1" y1="306.1" x2="529.3" y2="331.4" stroke="#3c4d1e" stroke-width="0.9"/><line x1="476.0" y1="296.5" x2="517.4" y2="304.2" stroke="#3c4d1e" stroke-width="0.9"/><polygon points="491.9,327.6 533.5,335.1 548.9,364.6 507.1,357.2" fill="#88aa44"/><polygon points="495.6,330.4 532.3,337.0 545.5,362.4 508.7,355.8" fill="#ffffe5"/><polygon points="519.1,334.6 528.6,336.4 541.8,361.7 532.2,360.0" fill="#a8dc64"/><polygon points="528.6,336.4 532.3,337.0 545.5,362.4 541.8,361.7" fill="#9dcb5a"/><polygon points="495.6,330.4 532.3,337.0 537.5,347.2 500.8,340.6" fill="#3c4d1e"/><line x1="532.3" y1="337.0" x2="545.5" y2="362.4" stroke="#3c4d1e" stroke-width="0.9"/><line x1="491.9" y1="327.6" x2="533.5" y2="335.1" stroke="#3c4d1e" stroke-width="0.9"/><polygon points="507.9,358.7 549.7,366.1 565.0,395.5 523.0,388.3" fill="#88aa44"/><polygon points="511.6,361.5 548.4,368.0 561.6,393.3 524.6,386.9" fill="#ffffe5"/><polygon points="535.1,365.6 544.7,367.3 557.9,392.7 548.3,391.0" fill="#a8dc64"/><polygon points="544.7,367.3 548.4,368.0 561.6,393.3 557.9,392.7" fill="#9dcb5a"/><polygon points="511.6,361.5 548.4,368.0 553.7,378.1 516.8,371.7" fill="#3c4d1e"/><line x1="548.4" y1="368.0" x2="561.6" y2="393.3" stroke="#3c4d1e" stroke-width="0.9"/><line x1="507.9" y1="358.7" x2="549.7" y2="366.1" stroke="#3c4d1e" stroke-width="0.9"/><polygon points="523.8,389.8 565.8,397.0 581.2,426.4 539.0,419.4" fill="#88aa44"/><polygon points="527.5,392.6 564.5,398.9 577.7,424.3 540.6,418.0" fill="#ffffe5"/><polygon points="551.2,396.6 560.8,398.3 574.0,423.6 564.3,422.0" fill="#a8dc64"/><polygon points="560.8,398.3 564.5,398.9 577.7,424.3 574.0,423.6" fill="#9dcb5a"/><polygon points="527.5,392.6 564.5,398.9 569.8,409.1 532.7,402.7" fill="#3c4d1e"/><line x1="564.5" y1="398.9" x2="577.7" y2="424.3" stroke="#3c4d1e" stroke-width="0.9"/><line x1="523.8" y1="389.8" x2="565.8" y2="397.0" stroke="#3c4d1e" stroke-width="0.9"/><polygon points="521.1,304.6 565.2,305.9 580.4,335.6 536.5,334.0" fill="#90b84c"/><polygon points="525.0,307.0 563.7,308.2 576.9,333.7 538.2,332.4" fill="#ffffe5"/><polygon points="552.9,307.9 559.9,308.1 573.0,333.6 566.0,333.3" fill="#a8dc64"/><polygon points="559.9,308.1 563.7,308.2 576.9,333.7 573.0,333.6" fill="#9dcb5a"/><polygon points="525.0,307.0 563.7,308.2 567.7,315.8 528.9,314.6" fill="#3c4d1e"/><line x1="563.7" y1="308.2" x2="576.9" y2="333.7" stroke="#3c4d1e" stroke-width="0.9"/><line x1="521.1" y1="304.6" x2="565.2" y2="305.9" stroke="#3c4d1e" stroke-width="0.9"/><polygon points="537.2,335.5 581.2,337.1 596.4,366.8 552.6,365.0" fill="#90b84c"/><polygon points="541.1,338.0 579.8,339.4 592.9,364.9 554.3,363.3" fill="#ffffe5"/><polygon points="568.9,339.0 575.9,339.2 589.0,364.7 582.1,364.4" fill="#a8dc64"/><polygon points="575.9,339.2 579.8,339.4 592.9,364.9 589.0,364.7" fill="#9dcb5a"/><polygon points="541.1,338.0 579.8,339.4 583.7,347.0 545.1,345.6" fill="#3c4d1e"/><line x1="579.8" y1="339.4" x2="592.9" y2="364.9" stroke="#3c4d1e" stroke-width="0.9"/><line x1="537.2" y1="335.5" x2="581.2" y2="337.1" stroke="#3c4d1e" stroke-width="0.9"/><polygon points="553.4,366.5 597.2,368.3 612.4,398.0 568.8,395.9" fill="#90b84c"/><polygon points="557.2,368.9 595.8,370.5 608.9,396.1 570.5,394.3" fill="#ffffe5"/><polygon points="585.0,370.1 591.9,370.4 605.0,395.9 598.1,395.6" fill="#a8dc64"/><polygon points="591.9,370.4 595.8,370.5 608.9,396.1 605.0,395.9" fill="#9dcb5a"/><polygon points="557.2,368.9 595.8,370.5 599.7,378.2 561.2,376.5" fill="#3c4d1e"/><line x1="595.8" y1="370.5" x2="608.9" y2="396.1" stroke="#3c4d1e" stroke-width="0.9"/><line x1="553.4" y1="366.5" x2="597.2" y2="368.3" stroke="#3c4d1e" stroke-width="0.9"/><polygon points="569.5,397.4 613.2,399.5 628.4,429.2 584.9,426.9" fill="#90b84c"/><polygon points="573.4,399.9 611.8,401.7 624.9,427.2 586.6,425.2" fill="#ffffe5"/><polygon points="601.0,401.2 607.9,401.5 621.1,427.0 614.2,426.7" fill="#a8dc64"/><polygon points="607.9,401.5 611.8,401.7 624.9,427.2 621.1,427.0" fill="#9dcb5a"/><polygon points="573.4,399.9 611.8,401.7 615.7,409.4 577.3,407.5" fill="#3c4d1e"/><line x1="611.8" y1="401.7" x2="624.9" y2="427.2" stroke="#3c4d1e" stroke-width="0.9"/><line x1="569.5" y1="397.4" x2="613.2" y2="399.5" stroke="#3c4d1e" stroke-width="0.9"/><polygon points="568.8,304.9 618.1,298.5 627.0,316.0 577.8,322.4" fill="#006e00"/><polygon points="623.9,412.3 673.2,406.3 682.2,423.9 632.8,429.7" fill="#007000"/><polygon points="578.1,323.0 627.4,316.7 642.1,345.5 592.8,351.7" fill="#9dcb5a"/><polygon points="582.3,324.9 625.6,319.3 638.3,344.1 594.9,349.6" fill="#ffffe5"/><polygon points="617.8,320.4 620.4,320.0 633.1,344.8 630.5,345.1" fill="#a8dc64"/><polygon points="620.4,320.0 625.6,319.3 638.3,344.1 633.1,344.8" fill="#9dcb5a"/><polygon points="582.3,324.9 625.6,319.3 628.4,324.8 585.0,330.4" fill="#3c4d1e"/><line x1="625.6" y1="319.3" x2="638.3" y2="344.1" stroke="#3c4d1e" stroke-width="0.9"/><line x1="578.1" y1="323.0" x2="627.4" y2="316.7" stroke="#3c4d1e" stroke-width="0.9"/><polygon points="593.5,353.0 642.7,346.7 657.5,375.6 608.2,381.7" fill="#9dcb5a"/><polygon points="597.6,354.9 641.0,349.4 653.6,374.2 610.3,379.6" fill="#ffffe5"/><polygon points="633.2,350.4 635.8,350.1 648.4,374.9 645.8,375.2" fill="#a8dc64"/><polygon points="635.8,350.1 641.0,349.4 653.6,374.2 648.4,374.9" fill="#9dcb5a"/><polygon points="597.6,354.9 641.0,349.4 643.7,354.9 600.4,360.3" fill="#3c4d1e"/><line x1="641.0" y1="349.4" x2="653.6" y2="374.2" stroke="#3c4d1e" stroke-width="0.9"/><line x1="593.5" y1="353.0" x2="642.7" y2="346.7" stroke="#3c4d1e" stroke-width="0.9"/><polygon points="608.8,382.9 658.1,376.8 672.9,405.7 623.6,411.6" fill="#9dcb5a"/><polygon points="613.0,384.9 656.3,379.5 669.0,404.3 625.6,409.6" fill="#ffffe5"/><polygon points="648.5,380.5 651.1,380.2 663.8,404.9 661.2,405.3" fill="#a8dc64"/><polygon points="651.1,380.2 656.3,379.5 669.0,404.3 663.8,404.9" fill="#9dcb5a"/><polygon points="613.0,384.9 656.3,379.5 659.1,385.0 615.8,390.3" fill="#3c4d1e"/><line x1="656.3" y1="379.5" x2="669.0" y2="404.3" stroke="#3c4d1e" stroke-width="0.9"/><line x1="608.8" y1="382.9" x2="658.1" y2="376.8" stroke="#3c4d1e" stroke-width="0.9"/><polygon points="622.6,298.4 669.4,286.8 684.7,316.6 637.9,328.3" fill="#9dcb5a"/><polygon points="626.6,300.1 667.8,289.8 681.0,315.5 639.8,325.8" fill="#ffffe5"/><polygon points="663.3,291.0 667.8,289.8 681.0,315.5 676.4,316.6" fill="#9dcb5a"/><polygon points="626.6,300.1 667.8,289.8 670.3,294.7 629.1,305.0" fill="#3c4d1e"/><line x1="667.8" y1="289.8" x2="681.0" y2="315.5" stroke="#3c4d1e" stroke-width="0.9"/><line x1="622.6" y1="298.4" x2="669.4" y2="286.8" stroke="#3c4d1e" stroke-width="0.9"/><polygon points="638.6,329.8 685.5,318.1 700.8,348.0 653.9,359.6" fill="#9dcb5a"/><polygon points="642.7,331.5 683.9,321.2 697.0,346.9 655.8,357.1" fill="#ffffe5"/><polygon points="679.3,322.3 683.9,321.2 697.0,346.9 692.5,348.0" fill="#9dcb5a"/><polygon points="642.7,331.5 683.9,321.2 686.4,326.1 645.2,336.4" fill="#3c4d1e"/><line x1="683.9" y1="321.2" x2="697.0" y2="346.9" stroke="#3c4d1e" stroke-width="0.9"/><line x1="638.6" y1="329.8" x2="685.5" y2="318.1" stroke="#3c4d1e" stroke-width="0.9"/><polygon points="654.7,361.1 701.5,349.5 716.9,379.3 669.9,391.0" fill="#9dcb5a"/><polygon points="658.7,362.8 700.0,352.5 713.1,378.2 671.8,388.5" fill="#ffffe5"/><polygon points="695.4,353.7 700.0,352.5 713.1,378.2 708.6,379.3" fill="#9dcb5a"/><polygon points="658.7,362.8 700.0,352.5 702.5,357.4 661.2,367.7" fill="#3c4d1e"/><line x1="700.0" y1="352.5" x2="713.1" y2="378.2" stroke="#3c4d1e" stroke-width="0.9"/><line x1="654.7" y1="361.1" x2="701.5" y2="349.5" stroke="#3c4d1e" stroke-width="0.9"/><polygon points="670.7,392.5 717.6,380.8 733.0,410.7 686.0,422.3" fill="#9dcb5a"/><polygon points="674.7,394.2 716.1,383.9 729.2,409.6 687.9,419.8" fill="#ffffe5"/><polygon points="711.5,385.0 716.1,383.9 729.2,409.6 724.7,410.7" fill="#9dcb5a"/><polygon points="674.7,394.2 716.1,383.9 718.6,388.8 677.2,399.1" fill="#3c4d1e"/><line x1="716.1" y1="383.9" x2="729.2" y2="409.6" stroke="#3c4d1e" stroke-width="0.9"/><line x1="670.7" y1="392.5" x2="717.6" y2="380.8" stroke="#3c4d1e" stroke-width="0.9"/><polygon points="673.2,285.7 715.9,274.1 731.7,304.2 688.6,315.6" fill="#9dcb5a"/><polygon points="677.0,287.4 714.6,277.2 728.2,303.1 690.3,313.1" fill="#ffffe5"/><polygon points="710.5,278.3 714.6,277.2 728.2,303.1 724.0,304.2" fill="#9dcb5a"/><polygon points="677.0,287.4 714.6,277.2 717.2,282.1 679.5,292.3" fill="#3c4d1e"/><line x1="714.6" y1="277.2" x2="728.2" y2="303.1" stroke="#3c4d1e" stroke-width="0.9"/><line x1="673.2" y1="285.7" x2="715.9" y2="274.1" stroke="#3c4d1e" stroke-width="0.9"/><polygon points="689.4,317.1 732.5,305.7 748.4,335.8 704.7,347.0" fill="#9dcb5a"/><polygon points="693.2,318.8 731.2,308.8 744.8,334.7 706.4,344.5" fill="#ffffe5"/><polygon points="727.0,309.9 731.2,308.8 744.8,334.7 740.6,335.8" fill="#9dcb5a"/><polygon points="693.2,318.8 731.2,308.8 733.8,313.7 695.7,323.7" fill="#3c4d1e"/><line x1="731.2" y1="308.8" x2="744.8" y2="334.7" stroke="#3c4d1e" stroke-width="0.9"/><line x1="689.4" y1="317.1" x2="732.5" y2="305.7" stroke="#3c4d1e" stroke-width="0.9"/><polygon points="705.5,348.5 749.2,337.3 765.0,367.5 720.8,378.3" fill="#9dcb5a"/><polygon points="709.3,350.2 747.8,340.4 761.4,366.3 722.6,375.9" fill="#ffffe5"/><polygon points="743.6,341.5 747.8,340.4 761.4,366.3 757.1,367.4" fill="#9dcb5a"/><polygon points="709.3,350.2 747.8,340.4 750.4,345.3 711.8,355.1" fill="#3c4d1e"/><line x1="747.8" y1="340.4" x2="761.4" y2="366.3" stroke="#3c4d1e" stroke-width="0.9"/><line x1="705.5" y1="348.5" x2="749.2" y2="337.3" stroke="#3c4d1e" stroke-width="0.9"/><polygon points="721.6,379.8 765.8,369.0 781.6,399.1 737.0,409.7" fill="#9dcb5a"/><polygon points="725.5,381.6 764.4,372.0 777.9,397.9 738.7,407.3" fill="#ffffe5"/><polygon points="760.1,373.1 764.4,372.0 777.9,397.9 773.6,399.0" fill="#9dcb5a"/><polygon points="725.5,381.6 764.4,372.0 766.9,377.0 728.0,386.5" fill="#3c4d1e"/><line x1="764.4" y1="372.0" x2="777.9" y2="397.9" stroke="#3c4d1e" stroke-width="0.9"/><line x1="721.6" y1="379.8" x2="765.8" y2="369.0" stroke="#3c4d1e" stroke-width="0.9"/><line x1="472.8" y1="295.4" x2="536.5" y2="428.8" stroke="#e00000" stroke-width="2.0"/><line x1="517.8" y1="303.8" x2="582.4" y2="436.5" stroke="#e00000" stroke-width="2.0"/><line x1="565.7" y1="305.2" x2="629.7" y2="439.0" stroke="#e00000" stroke-width="2.0"/><line x1="619.2" y1="298.2" x2="683.3" y2="432.6" stroke="#e00000" stroke-width="2.0"/><line x1="670.0" y1="285.5" x2="734.4" y2="419.9" stroke="#e00000" stroke-width="2.0"/><polygon points="438.0,282.0 499.0,407.0 491.4,415.3 430.4,290.3" fill="#ffee2e"/><polygon points="883.4,524.5 933.0,511.6 933.0,521.1 883.4,534.0" fill="#6a5716"/><polygon points="933.0,511.6 982.6,498.7 982.6,508.2 933.0,521.1" fill="#6a5716"/><polygon points="987.1,507.2 1036.7,494.3 1036.7,503.8 987.1,516.7" fill="#6a5716"/><polygon points="1036.7,494.3 1086.3,481.4 1086.3,490.9 1036.7,503.8" fill="#6a5716"/><polygon points="1086.3,481.4 1135.9,468.5 1135.9,478.0 1086.3,490.9" fill="#6a5716"/><polygon points="1135.9,468.5 1185.5,455.6 1185.5,465.1 1135.9,478.0" fill="#6a5716"/><polygon points="1194.4,472.7 1240.5,460.7 1240.5,470.2 1194.4,482.2" fill="#6a5716"/><polygon points="817.9,399.1 883.4,524.5 883.4,534.0 817.9,408.6" fill="#d8b024"/><polygon points="816.4,399.5 869.0,385.8 934.5,511.2 881.9,524.9" fill="#fcd62e"/><polygon points="866.0,386.6 918.6,372.9 984.1,498.3 931.5,512.0" fill="#fcd62e"/><polygon points="913.3,369.4 965.9,355.7 1038.2,494.0 985.6,507.6" fill="#fcd62e"/><polygon points="960.7,352.1 1013.3,338.5 1087.8,481.1 1035.2,494.7" fill="#fcd62e"/><polygon points="1018.9,355.7 1071.4,342.0 1137.4,468.2 1084.8,481.8" fill="#fcd62e"/><polygon points="1068.1,342.1 1120.7,328.5 1187.0,455.3 1134.4,468.9" fill="#fcd62e"/><polygon points="1126.7,346.3 1174.3,333.9 1240.5,460.7 1192.9,473.1" fill="#fcd62e"/><polygon points="824.0,400.0 863.2,389.8 877.8,417.7 838.6,427.9" fill="#9dcb5a"/><polygon points="829.1,402.2 861.3,393.8 873.1,416.4 840.9,424.8" fill="#ffffe5"/><polygon points="858.4,394.5 861.3,393.8 873.1,416.4 870.2,417.1" fill="#9dcb5a"/><polygon points="829.1,402.2 861.3,393.8 864.1,399.2 832.0,407.6" fill="#3c4d1e"/><line x1="861.3" y1="393.8" x2="873.1" y2="416.4" stroke="#3c4d1e" stroke-width="0.9"/><line x1="824.0" y1="400.0" x2="863.2" y2="389.8" stroke="#3c4d1e" stroke-width="0.9"/><polygon points="840.2,431.0 879.4,420.8 894.0,448.7 854.8,458.9" fill="#9dcb5a"/><polygon points="845.3,433.2 877.5,424.8 889.3,447.4 857.1,455.8" fill="#ffffe5"/><polygon points="874.6,425.5 877.5,424.8 889.3,447.4 886.4,448.1" fill="#9dcb5a"/><polygon points="845.3,433.2 877.5,424.8 880.3,430.2 848.2,438.6" fill="#3c4d1e"/><line x1="877.5" y1="424.8" x2="889.3" y2="447.4" stroke="#3c4d1e" stroke-width="0.9"/><line x1="840.2" y1="431.0" x2="879.4" y2="420.8" stroke="#3c4d1e" stroke-width="0.9"/><polygon points="856.4,462.0 895.6,451.8 910.2,479.7 871.0,489.9" fill="#9dcb5a"/><polygon points="861.5,464.2 893.7,455.8 905.5,478.4 873.3,486.8" fill="#ffffe5"/><polygon points="890.8,456.5 893.7,455.8 905.5,478.4 902.6,479.1" fill="#9dcb5a"/><polygon points="861.5,464.2 893.7,455.8 896.5,461.2 864.4,469.6" fill="#3c4d1e"/><line x1="893.7" y1="455.8" x2="905.5" y2="478.4" stroke="#3c4d1e" stroke-width="0.9"/><line x1="856.4" y1="462.0" x2="895.6" y2="451.8" stroke="#3c4d1e" stroke-width="0.9"/><polygon points="872.6,493.0 911.8,482.8 926.4,510.7 887.2,520.9" fill="#9dcb5a"/><polygon points="877.7,495.2 909.9,486.8 921.7,509.4 889.5,517.8" fill="#ffffe5"/><polygon points="907.0,487.5 909.9,486.8 921.7,509.4 918.8,510.1" fill="#9dcb5a"/><polygon points="877.7,495.2 909.9,486.8 912.7,492.2 880.6,500.6" fill="#3c4d1e"/><line x1="909.9" y1="486.8" x2="921.7" y2="509.4" stroke="#3c4d1e" stroke-width="0.9"/><line x1="872.6" y1="493.0" x2="911.8" y2="482.8" stroke="#3c4d1e" stroke-width="0.9"/><polygon points="873.6,387.1 912.8,376.9 927.4,404.8 888.2,415.0" fill="#9dcb5a"/><polygon points="878.7,389.3 910.9,380.9 922.7,403.5 890.5,411.9" fill="#ffffe5"/><polygon points="908.0,381.6 910.9,380.9 922.7,403.5 919.8,404.2" fill="#9dcb5a"/><polygon points="878.7,389.3 910.9,380.9 913.7,386.3 881.6,394.7" fill="#3c4d1e"/><line x1="910.9" y1="380.9" x2="922.7" y2="403.5" stroke="#3c4d1e" stroke-width="0.9"/><line x1="873.6" y1="387.1" x2="912.8" y2="376.9" stroke="#3c4d1e" stroke-width="0.9"/><polygon points="889.8,418.1 929.0,407.9 943.6,435.8 904.4,446.0" fill="#9dcb5a"/><polygon points="894.9,420.3 927.1,411.9 938.9,434.5 906.7,442.9" fill="#ffffe5"/><polygon points="924.2,412.6 927.1,411.9 938.9,434.5 936.0,435.2" fill="#9dcb5a"/><polygon points="894.9,420.3 927.1,411.9 929.9,417.3 897.8,425.7" fill="#3c4d1e"/><line x1="927.1" y1="411.9" x2="938.9" y2="434.5" stroke="#3c4d1e" stroke-width="0.9"/><line x1="889.8" y1="418.1" x2="929.0" y2="407.9" stroke="#3c4d1e" stroke-width="0.9"/><polygon points="906.0,449.1 945.2,438.9 959.8,466.8 920.6,477.0" fill="#9dcb5a"/><polygon points="911.1,451.3 943.3,442.9 955.1,465.5 922.9,473.9" fill="#ffffe5"/><polygon points="940.4,443.6 943.3,442.9 955.1,465.5 952.2,466.2" fill="#9dcb5a"/><polygon points="911.1,451.3 943.3,442.9 946.1,448.3 914.0,456.7" fill="#3c4d1e"/><line x1="943.3" y1="442.9" x2="955.1" y2="465.5" stroke="#3c4d1e" stroke-width="0.9"/><line x1="906.0" y1="449.1" x2="945.2" y2="438.9" stroke="#3c4d1e" stroke-width="0.9"/><polygon points="922.2,480.1 961.4,469.9 976.0,497.8 936.8,508.0" fill="#9dcb5a"/><polygon points="927.3,482.3 959.5,473.9 971.3,496.5 939.1,504.9" fill="#ffffe5"/><polygon points="956.6,474.6 959.5,473.9 971.3,496.5 968.4,497.2" fill="#9dcb5a"/><polygon points="927.3,482.3 959.5,473.9 962.3,479.3 930.2,487.7" fill="#3c4d1e"/><line x1="959.5" y1="473.9" x2="971.3" y2="496.5" stroke="#3c4d1e" stroke-width="0.9"/><line x1="922.2" y1="480.1" x2="961.4" y2="469.9" stroke="#3c4d1e" stroke-width="0.9"/><polygon points="920.9,369.9 960.1,359.7 974.7,387.6 935.5,397.8" fill="#9dcb5a"/><polygon points="926.1,372.0 958.2,363.7 970.0,386.3 937.9,394.6" fill="#ffffe5"/><polygon points="955.3,364.4 958.2,363.7 970.0,386.3 967.1,387.0" fill="#9dcb5a"/><polygon points="926.1,372.0 958.2,363.7 961.0,369.1 928.9,377.4" fill="#3c4d1e"/><line x1="958.2" y1="363.7" x2="970.0" y2="386.3" stroke="#3c4d1e" stroke-width="0.9"/><line x1="920.9" y1="369.9" x2="960.1" y2="359.7" stroke="#3c4d1e" stroke-width="0.9"/><polygon points="937.1,400.9 976.3,390.7 990.9,418.6 951.7,428.8" fill="#9dcb5a"/><polygon points="942.3,403.0 974.4,394.7 986.2,417.3 954.1,425.6" fill="#ffffe5"/><polygon points="971.5,395.4 974.4,394.7 986.2,417.3 983.3,418.0" fill="#9dcb5a"/><polygon points="942.3,403.0 974.4,394.7 977.2,400.1 945.1,408.4" fill="#3c4d1e"/><line x1="974.4" y1="394.7" x2="986.2" y2="417.3" stroke="#3c4d1e" stroke-width="0.9"/><line x1="937.1" y1="400.9" x2="976.3" y2="390.7" stroke="#3c4d1e" stroke-width="0.9"/><polygon points="953.3,431.9 992.5,421.7 1007.1,449.6 967.9,459.8" fill="#9dcb5a"/><polygon points="958.5,434.0 990.6,425.7 1002.4,448.3 970.3,456.6" fill="#ffffe5"/><polygon points="987.7,426.4 990.6,425.7 1002.4,448.3 999.5,449.0" fill="#9dcb5a"/><polygon points="958.5,434.0 990.6,425.7 993.4,431.1 961.3,439.4" fill="#3c4d1e"/><line x1="990.6" y1="425.7" x2="1002.4" y2="448.3" stroke="#3c4d1e" stroke-width="0.9"/><line x1="953.3" y1="431.9" x2="992.5" y2="421.7" stroke="#3c4d1e" stroke-width="0.9"/><polygon points="976.0,475.3 1015.2,465.1 1029.8,493.0 990.6,503.2" fill="#9dcb5a"/><polygon points="981.1,477.4 1013.3,469.1 1025.1,491.7 993.0,500.0" fill="#ffffe5"/><polygon points="1010.4,469.8 1013.3,469.1 1025.1,491.7 1022.2,492.4" fill="#9dcb5a"/><polygon points="981.1,477.4 1013.3,469.1 1016.1,474.5 984.0,482.8" fill="#3c4d1e"/><line x1="1013.3" y1="469.1" x2="1025.1" y2="491.7" stroke="#3c4d1e" stroke-width="0.9"/><line x1="976.0" y1="475.3" x2="1015.2" y2="465.1" stroke="#3c4d1e" stroke-width="0.9"/><polygon points="968.3,352.6 1007.4,342.4 1022.0,370.3 982.8,380.5" fill="#9dcb5a"/><polygon points="973.4,354.8 1005.5,346.4 1017.3,369.0 985.2,377.4" fill="#ffffe5"/><polygon points="1002.6,347.2 1005.5,346.4 1017.3,369.0 1014.4,369.8" fill="#9dcb5a"/><polygon points="973.4,354.8 1005.5,346.4 1008.4,351.8 976.2,360.2" fill="#3c4d1e"/><line x1="1005.5" y1="346.4" x2="1017.3" y2="369.0" stroke="#3c4d1e" stroke-width="0.9"/><line x1="968.3" y1="352.6" x2="1007.4" y2="342.4" stroke="#3c4d1e" stroke-width="0.9"/><polygon points="984.5,383.6 1023.6,373.4 1038.2,401.3 999.0,411.5" fill="#9dcb5a"/><polygon points="989.6,385.8 1021.7,377.4 1033.5,400.0 1001.4,408.4" fill="#ffffe5"/><polygon points="1018.8,378.2 1021.7,377.4 1033.5,400.0 1030.6,400.8" fill="#9dcb5a"/><polygon points="989.6,385.8 1021.7,377.4 1024.6,382.8 992.4,391.2" fill="#3c4d1e"/><line x1="1021.7" y1="377.4" x2="1033.5" y2="400.0" stroke="#3c4d1e" stroke-width="0.9"/><line x1="984.5" y1="383.6" x2="1023.6" y2="373.4" stroke="#3c4d1e" stroke-width="0.9"/><polygon points="1000.7,414.6 1039.8,404.4 1054.4,432.3 1015.2,442.5" fill="#9dcb5a"/><polygon points="1005.8,416.8 1037.9,408.4 1049.7,431.0 1017.6,439.4" fill="#ffffe5"/><polygon points="1035.0,409.2 1037.9,408.4 1049.7,431.0 1046.8,431.8" fill="#9dcb5a"/><polygon points="1005.8,416.8 1037.9,408.4 1040.8,413.8 1008.6,422.2" fill="#3c4d1e"/><line x1="1037.9" y1="408.4" x2="1049.7" y2="431.0" stroke="#3c4d1e" stroke-width="0.9"/><line x1="1000.7" y1="414.6" x2="1039.8" y2="404.4" stroke="#3c4d1e" stroke-width="0.9"/><polygon points="1025.5,462.1 1064.6,451.9 1079.2,479.8 1040.0,490.0" fill="#9dcb5a"/><polygon points="1030.6,464.2 1062.7,455.8 1074.5,478.4 1042.4,486.8" fill="#ffffe5"/><polygon points="1059.8,456.6 1062.7,455.8 1074.5,478.4 1071.6,479.2" fill="#9dcb5a"/><polygon points="1030.6,464.2 1062.7,455.8 1065.5,461.3 1033.4,469.6" fill="#3c4d1e"/><line x1="1062.7" y1="455.8" x2="1074.5" y2="478.4" stroke="#3c4d1e" stroke-width="0.9"/><line x1="1025.5" y1="462.1" x2="1064.6" y2="451.9" stroke="#3c4d1e" stroke-width="0.9"/><polygon points="1026.5,356.1 1065.6,346.0 1080.2,373.9 1041.0,384.0" fill="#9dcb5a"/><polygon points="1031.6,358.3 1063.7,349.9 1075.5,372.5 1043.4,380.9" fill="#ffffe5"/><polygon points="1060.8,350.7 1063.7,349.9 1075.5,372.5 1072.6,373.3" fill="#9dcb5a"/><polygon points="1031.6,358.3 1063.7,349.9 1066.5,355.4 1034.4,363.7" fill="#3c4d1e"/><line x1="1063.7" y1="349.9" x2="1075.5" y2="372.5" stroke="#3c4d1e" stroke-width="0.9"/><line x1="1026.5" y1="356.1" x2="1065.6" y2="346.0" stroke="#3c4d1e" stroke-width="0.9"/><polygon points="1042.7,387.1 1081.8,377.0 1096.4,404.9 1057.2,415.0" fill="#9dcb5a"/><polygon points="1047.8,389.3 1079.9,380.9 1091.7,403.5 1059.6,411.9" fill="#ffffe5"/><polygon points="1077.0,381.7 1079.9,380.9 1091.7,403.5 1088.8,404.3" fill="#9dcb5a"/><polygon points="1047.8,389.3 1079.9,380.9 1082.7,386.4 1050.6,394.7" fill="#3c4d1e"/><line x1="1079.9" y1="380.9" x2="1091.7" y2="403.5" stroke="#3c4d1e" stroke-width="0.9"/><line x1="1042.7" y1="387.1" x2="1081.8" y2="377.0" stroke="#3c4d1e" stroke-width="0.9"/><polygon points="1058.8,418.1 1098.0,408.0 1112.6,435.9 1073.4,446.0" fill="#9dcb5a"/><polygon points="1064.0,420.3 1096.1,411.9 1107.9,434.5 1075.8,442.9" fill="#ffffe5"/><polygon points="1093.2,412.7 1096.1,411.9 1107.9,434.5 1105.0,435.3" fill="#9dcb5a"/><polygon points="1064.0,420.3 1096.1,411.9 1098.9,417.4 1066.8,425.7" fill="#3c4d1e"/><line x1="1096.1" y1="411.9" x2="1107.9" y2="434.5" stroke="#3c4d1e" stroke-width="0.9"/><line x1="1058.8" y1="418.1" x2="1098.0" y2="408.0" stroke="#3c4d1e" stroke-width="0.9"/><polygon points="1075.0,449.1 1114.2,439.0 1128.8,466.9 1089.6,477.0" fill="#9dcb5a"/><polygon points="1080.2,451.3 1112.3,442.9 1124.1,465.5 1092.0,473.9" fill="#ffffe5"/><polygon points="1109.4,443.7 1112.3,442.9 1124.1,465.5 1121.2,466.3" fill="#9dcb5a"/><polygon points="1080.2,451.3 1112.3,442.9 1115.1,448.4 1083.0,456.7" fill="#3c4d1e"/><line x1="1112.3" y1="442.9" x2="1124.1" y2="465.5" stroke="#3c4d1e" stroke-width="0.9"/><line x1="1075.0" y1="449.1" x2="1114.2" y2="439.0" stroke="#3c4d1e" stroke-width="0.9"/><polygon points="1075.7,342.6 1114.9,332.4 1129.5,360.3 1090.3,370.5" fill="#9dcb5a"/><polygon points="1080.9,344.8 1113.0,336.4 1124.8,359.0 1092.7,367.4" fill="#ffffe5"/><polygon points="1110.1,337.2 1113.0,336.4 1124.8,359.0 1121.9,359.8" fill="#9dcb5a"/><polygon points="1080.9,344.8 1113.0,336.4 1115.8,341.8 1083.7,350.2" fill="#3c4d1e"/><line x1="1113.0" y1="336.4" x2="1124.8" y2="359.0" stroke="#3c4d1e" stroke-width="0.9"/><line x1="1075.7" y1="342.6" x2="1114.9" y2="332.4" stroke="#3c4d1e" stroke-width="0.9"/><polygon points="1091.9,373.6 1131.1,363.4 1145.7,391.3 1106.5,401.5" fill="#9dcb5a"/><polygon points="1097.1,375.8 1129.2,367.4 1141.0,390.0 1108.9,398.4" fill="#ffffe5"/><polygon points="1126.3,368.2 1129.2,367.4 1141.0,390.0 1138.1,390.8" fill="#9dcb5a"/><polygon points="1097.1,375.8 1129.2,367.4 1132.0,372.8 1099.9,381.2" fill="#3c4d1e"/><line x1="1129.2" y1="367.4" x2="1141.0" y2="390.0" stroke="#3c4d1e" stroke-width="0.9"/><line x1="1091.9" y1="373.6" x2="1131.1" y2="363.4" stroke="#3c4d1e" stroke-width="0.9"/><polygon points="1108.1,404.6 1147.3,394.4 1161.9,422.3 1122.7,432.5" fill="#9dcb5a"/><polygon points="1113.3,406.8 1145.4,398.4 1157.2,421.0 1125.1,429.4" fill="#ffffe5"/><polygon points="1142.5,399.2 1145.4,398.4 1157.2,421.0 1154.3,421.8" fill="#9dcb5a"/><polygon points="1113.3,406.8 1145.4,398.4 1148.2,403.8 1116.1,412.2" fill="#3c4d1e"/><line x1="1145.4" y1="398.4" x2="1157.2" y2="421.0" stroke="#3c4d1e" stroke-width="0.9"/><line x1="1108.1" y1="404.6" x2="1147.3" y2="394.4" stroke="#3c4d1e" stroke-width="0.9"/><polygon points="1124.3,435.6 1163.5,425.4 1178.1,453.3 1138.9,463.5" fill="#9dcb5a"/><polygon points="1129.5,437.8 1161.6,429.4 1173.4,452.0 1141.3,460.4" fill="#ffffe5"/><polygon points="1158.7,430.2 1161.6,429.4 1173.4,452.0 1170.5,452.8" fill="#9dcb5a"/><polygon points="1129.5,437.8 1161.6,429.4 1164.4,434.8 1132.3,443.2" fill="#3c4d1e"/><line x1="1161.6" y1="429.4" x2="1173.4" y2="452.0" stroke="#3c4d1e" stroke-width="0.9"/><line x1="1124.3" y1="435.6" x2="1163.5" y2="425.4" stroke="#3c4d1e" stroke-width="0.9"/><polygon points="1134.2,346.8 1173.4,336.6 1188.0,364.5 1148.8,374.7" fill="#9dcb5a"/><polygon points="1139.4,348.9 1171.5,340.6 1183.3,363.2 1151.2,371.5" fill="#ffffe5"/><polygon points="1168.6,341.3 1171.5,340.6 1183.3,363.2 1180.4,363.9" fill="#9dcb5a"/><polygon points="1139.4,348.9 1171.5,340.6 1174.3,346.0 1142.2,354.4" fill="#3c4d1e"/><line x1="1171.5" y1="340.6" x2="1183.3" y2="363.2" stroke="#3c4d1e" stroke-width="0.9"/><line x1="1134.2" y1="346.8" x2="1173.4" y2="336.6" stroke="#3c4d1e" stroke-width="0.9"/><polygon points="1150.4,377.8 1189.6,367.6 1204.2,395.5 1165.0,405.7" fill="#9dcb5a"/><polygon points="1155.6,379.9 1187.7,371.6 1199.5,394.2 1167.4,402.5" fill="#ffffe5"/><polygon points="1184.8,372.3 1187.7,371.6 1199.5,394.2 1196.6,394.9" fill="#9dcb5a"/><polygon points="1155.6,379.9 1187.7,371.6 1190.5,377.0 1158.4,385.4" fill="#3c4d1e"/><line x1="1187.7" y1="371.6" x2="1199.5" y2="394.2" stroke="#3c4d1e" stroke-width="0.9"/><line x1="1150.4" y1="377.8" x2="1189.6" y2="367.6" stroke="#3c4d1e" stroke-width="0.9"/><polygon points="1166.6,408.8 1205.8,398.6 1220.4,426.5 1181.2,436.7" fill="#9dcb5a"/><polygon points="1171.8,410.9 1203.9,402.6 1215.7,425.2 1183.6,433.5" fill="#ffffe5"/><polygon points="1201.0,403.3 1203.9,402.6 1215.7,425.2 1212.8,425.9" fill="#9dcb5a"/><polygon points="1171.8,410.9 1203.9,402.6 1206.7,408.0 1174.6,416.4" fill="#3c4d1e"/><line x1="1203.9" y1="402.6" x2="1215.7" y2="425.2" stroke="#3c4d1e" stroke-width="0.9"/><line x1="1166.6" y1="408.8" x2="1205.8" y2="398.6" stroke="#3c4d1e" stroke-width="0.9"/><polygon points="1182.8,439.8 1222.0,429.6 1236.6,457.5 1197.4,467.7" fill="#9dcb5a"/><polygon points="1188.0,441.9 1220.1,433.6 1231.9,456.2 1199.8,464.5" fill="#ffffe5"/><polygon points="1217.2,434.3 1220.1,433.6 1231.9,456.2 1229.0,456.9" fill="#9dcb5a"/><polygon points="1188.0,441.9 1220.1,433.6 1222.9,439.0 1190.8,447.4" fill="#3c4d1e"/><line x1="1220.1" y1="433.6" x2="1231.9" y2="456.2" stroke="#3c4d1e" stroke-width="0.9"/><line x1="1182.8" y1="439.8" x2="1222.0" y2="429.6" stroke="#3c4d1e" stroke-width="0.9"/><polygon points="965.9,467.7 969.7,475.1 1067.5,449.7 1058.9,433.3 1010.8,445.8 1015.5,454.8" fill="#ff0000"/><polygon points="577.0,634.4 641.4,760.7 641.4,779.7 577.0,653.4" fill="#0000b0"/><polygon points="577.0,634.4 641.4,760.7 641.4,770.2 577.0,643.9" fill="#d8b428"/><polygon points="641.4,760.7 1232.9,608.5 1232.9,627.5 641.4,779.7" fill="#00006e"/><polygon points="641.4,760.7 1232.9,608.5 1232.9,618.0 641.4,770.2" fill="#6a5716"/><polygon points="577.0,634.4 1168.5,482.2 1232.9,608.5 641.4,760.7" fill="#fcd62e"/><polygon points="871.6,558.6 901.1,551.0 932.7,612.9 903.1,620.5" fill="#fcd42e"/><line x1="875.3" y1="560.7" x2="891.3" y2="560.7" stroke="#ff1800" stroke-width="1.1"/><line x1="876.9" y1="562.9" x2="894.2" y2="562.9" stroke="#ff1800" stroke-width="1.1"/><line x1="878.8" y1="565.2" x2="884.3" y2="565.2" stroke="#ff1800" stroke-width="1.1"/><line x1="878.1" y1="567.5" x2="900.6" y2="567.5" stroke="#ff1800" stroke-width="1.1"/><line x1="880.0" y1="569.8" x2="889.2" y2="569.8" stroke="#ff1800" stroke-width="1.1"/><line x1="883.4" y1="572.0" x2="897.8" y2="572.0" stroke="#ff1800" stroke-width="1.1"/><line x1="884.1" y1="574.3" x2="898.6" y2="574.3" stroke="#ff1800" stroke-width="1.1"/><line x1="884.7" y1="576.6" x2="892.0" y2="576.6" stroke="#ff1800" stroke-width="1.1"/><line x1="885.8" y1="578.9" x2="908.9" y2="578.9" stroke="#ff1800" stroke-width="1.1"/><line x1="886.6" y1="581.1" x2="906.9" y2="581.1" stroke="#ff1800" stroke-width="1.1"/><line x1="888.2" y1="583.4" x2="893.6" y2="583.4" stroke="#ff1800" stroke-width="1.1"/><line x1="889.7" y1="585.7" x2="906.7" y2="585.7" stroke="#ff1800" stroke-width="1.1"/><line x1="889.4" y1="588.0" x2="894.1" y2="588.0" stroke="#ff1800" stroke-width="1.1"/><line x1="892.3" y1="590.2" x2="906.7" y2="590.2" stroke="#ff1800" stroke-width="1.1"/><line x1="893.0" y1="592.5" x2="916.3" y2="592.5" stroke="#ff1800" stroke-width="1.1"/><line x1="894.2" y1="594.8" x2="918.4" y2="594.8" stroke="#ff1800" stroke-width="1.1"/><line x1="894.4" y1="597.0" x2="916.0" y2="597.0" stroke="#ff1800" stroke-width="1.1"/><line x1="895.7" y1="599.3" x2="920.3" y2="599.3" stroke="#ff1800" stroke-width="1.1"/><line x1="898.1" y1="601.6" x2="904.3" y2="601.6" stroke="#ff1800" stroke-width="1.1"/><line x1="897.1" y1="603.9" x2="905.8" y2="603.9" stroke="#ff1800" stroke-width="1.1"/><line x1="900.7" y1="606.1" x2="914.3" y2="606.1" stroke="#ff1800" stroke-width="1.1"/><line x1="900.9" y1="608.4" x2="911.5" y2="608.4" stroke="#ff1800" stroke-width="1.1"/><line x1="901.7" y1="610.7" x2="914.1" y2="610.7" stroke="#ff1800" stroke-width="1.1"/><line x1="902.3" y1="613.0" x2="919.2" y2="613.0" stroke="#ff1800" stroke-width="1.1"/><line x1="904.2" y1="615.2" x2="928.1" y2="615.2" stroke="#ff1800" stroke-width="1.1"/><line x1="905.7" y1="617.5" x2="930.1" y2="617.5" stroke="#ff1800" stroke-width="1.1"/><polygon points="594.2,631.4 634.4,621.1 648.9,649.5 608.7,659.8" fill="#9dcb5a"/><polygon points="599.4,633.6 632.4,625.1 644.1,648.1 611.2,656.6" fill="#ffffe5"/><polygon points="601.8,638.2 634.7,629.7 639.2,638.5 606.2,646.9" fill="#000080"/><polygon points="629.4,625.9 632.4,625.1 644.1,648.1 641.2,648.9" fill="#9dcb5a"/><polygon points="599.4,633.6 632.4,625.1 635.2,630.6 602.2,639.1" fill="#3c4d1e"/><line x1="632.4" y1="625.1" x2="644.1" y2="648.1" stroke="#3c4d1e" stroke-width="0.9"/><line x1="594.2" y1="631.4" x2="634.4" y2="621.1" stroke="#3c4d1e" stroke-width="0.9"/><polygon points="655.1,615.7 695.4,605.4 709.8,633.8 669.6,644.1" fill="#9dcb5a"/><polygon points="660.3,617.9 693.3,609.4 705.1,632.5 672.1,640.9" fill="#ffffe5"/><polygon points="662.7,622.5 695.7,614.0 700.1,622.8 667.2,631.3" fill="#000080"/><polygon points="690.4,610.2 693.3,609.4 705.1,632.5 702.1,633.2" fill="#9dcb5a"/><polygon points="660.3,617.9 693.3,609.4 696.1,615.0 663.2,623.4" fill="#3c4d1e"/><line x1="693.3" y1="609.4" x2="705.1" y2="632.5" stroke="#3c4d1e" stroke-width="0.9"/><line x1="655.1" y1="615.7" x2="695.4" y2="605.4" stroke="#3c4d1e" stroke-width="0.9"/><polygon points="705.4,602.8 745.6,592.4 760.1,620.9 719.9,631.2" fill="#9dcb5a"/><polygon points="710.6,605.0 743.6,596.5 755.3,619.5 722.4,628.0" fill="#ffffe5"/><polygon points="713.0,609.6 746.0,601.1 750.4,609.8 717.4,618.3" fill="#000080"/><polygon points="740.6,597.3 743.6,596.5 755.3,619.5 752.4,620.3" fill="#9dcb5a"/><polygon points="710.6,605.0 743.6,596.5 746.4,602.0 713.4,610.5" fill="#3c4d1e"/><line x1="743.6" y1="596.5" x2="755.3" y2="619.5" stroke="#3c4d1e" stroke-width="0.9"/><line x1="705.4" y1="602.8" x2="745.6" y2="592.4" stroke="#3c4d1e" stroke-width="0.9"/><polygon points="755.7,589.9 795.9,579.5 810.4,607.9 770.2,618.3" fill="#9dcb5a"/><polygon points="760.9,592.0 793.9,583.6 805.6,606.6 772.6,615.1" fill="#ffffe5"/><polygon points="763.2,596.6 796.2,588.2 800.7,596.9 767.7,605.4" fill="#000080"/><polygon points="790.9,584.3 793.9,583.6 805.6,606.6 802.6,607.3" fill="#9dcb5a"/><polygon points="760.9,592.0 793.9,583.6 796.7,589.1 763.7,597.6" fill="#3c4d1e"/><line x1="793.9" y1="583.6" x2="805.6" y2="606.6" stroke="#3c4d1e" stroke-width="0.9"/><line x1="755.7" y1="589.9" x2="795.9" y2="579.5" stroke="#3c4d1e" stroke-width="0.9"/><polygon points="804.8,577.2 845.0,566.9 859.5,595.3 819.3,605.6" fill="#9dcb5a"/><polygon points="810.0,579.4 843.0,570.9 854.7,593.9 821.7,602.4" fill="#ffffe5"/><polygon points="812.3,584.0 845.3,575.5 849.8,584.3 816.8,592.8" fill="#000080"/><polygon points="840.0,571.7 843.0,570.9 854.7,593.9 851.7,594.7" fill="#9dcb5a"/><polygon points="810.0,579.4 843.0,570.9 845.8,576.5 812.8,584.9" fill="#3c4d1e"/><line x1="843.0" y1="570.9" x2="854.7" y2="593.9" stroke="#3c4d1e" stroke-width="0.9"/><line x1="804.8" y1="577.2" x2="845.0" y2="566.9" stroke="#3c4d1e" stroke-width="0.9"/><polygon points="902.4,552.1 942.6,541.8 957.1,570.2 916.9,580.5" fill="#9dcb5a"/><polygon points="907.6,554.3 940.6,545.8 952.3,568.8 919.3,577.3" fill="#ffffe5"/><polygon points="909.9,558.9 942.9,550.4 947.4,559.2 914.4,567.7" fill="#000080"/><polygon points="937.6,546.6 940.6,545.8 952.3,568.8 949.3,569.6" fill="#9dcb5a"/><polygon points="907.6,554.3 940.6,545.8 943.4,551.3 910.4,559.8" fill="#3c4d1e"/><line x1="940.6" y1="545.8" x2="952.3" y2="568.8" stroke="#3c4d1e" stroke-width="0.9"/><line x1="902.4" y1="552.1" x2="942.6" y2="541.8" stroke="#3c4d1e" stroke-width="0.9"/><polygon points="952.1,539.3 992.3,529.0 1006.8,557.4 966.6,567.7" fill="#9dcb5a"/><polygon points="957.3,541.5 990.3,533.0 1002.0,556.0 969.0,564.5" fill="#ffffe5"/><polygon points="959.6,546.1 992.6,537.6 997.1,546.4 964.1,554.9" fill="#000080"/><polygon points="987.3,533.8 990.3,533.0 1002.0,556.0 999.0,556.8" fill="#9dcb5a"/><polygon points="957.3,541.5 990.3,533.0 993.1,538.6 960.1,547.0" fill="#3c4d1e"/><line x1="990.3" y1="533.0" x2="1002.0" y2="556.0" stroke="#3c4d1e" stroke-width="0.9"/><line x1="952.1" y1="539.3" x2="992.3" y2="529.0" stroke="#3c4d1e" stroke-width="0.9"/><polygon points="1001.7,526.5 1042.0,516.2 1056.5,544.6 1016.2,555.0" fill="#9dcb5a"/><polygon points="1007.0,528.7 1039.9,520.2 1051.7,543.3 1018.7,551.7" fill="#ffffe5"/><polygon points="1009.3,533.3 1042.3,524.8 1046.8,533.6 1013.8,542.1" fill="#000080"/><polygon points="1037.0,521.0 1039.9,520.2 1051.7,543.3 1048.7,544.0" fill="#9dcb5a"/><polygon points="1007.0,528.7 1039.9,520.2 1042.8,525.8 1009.8,534.3" fill="#3c4d1e"/><line x1="1039.9" y1="520.2" x2="1051.7" y2="543.3" stroke="#3c4d1e" stroke-width="0.9"/><line x1="1001.7" y1="526.5" x2="1042.0" y2="516.2" stroke="#3c4d1e" stroke-width="0.9"/><polygon points="1051.4,513.8 1091.7,503.4 1106.1,531.8 1065.9,542.2" fill="#9dcb5a"/><polygon points="1056.6,515.9 1089.6,507.5 1101.4,530.5 1068.4,539.0" fill="#ffffe5"/><polygon points="1059.0,520.5 1092.0,512.1 1096.4,520.8 1063.5,529.3" fill="#000080"/><polygon points="1086.7,508.2 1089.6,507.5 1101.4,530.5 1098.4,531.2" fill="#9dcb5a"/><polygon points="1056.6,515.9 1089.6,507.5 1092.4,513.0 1059.5,521.5" fill="#3c4d1e"/><line x1="1089.6" y1="507.5" x2="1101.4" y2="530.5" stroke="#3c4d1e" stroke-width="0.9"/><line x1="1051.4" y1="513.8" x2="1091.7" y2="503.4" stroke="#3c4d1e" stroke-width="0.9"/><polygon points="1114.7,497.5 1154.9,487.1 1169.4,515.5 1129.2,525.9" fill="#9dcb5a"/><polygon points="1119.9,499.7 1152.9,491.2 1164.7,514.2 1131.7,522.7" fill="#ffffe5"/><polygon points="1122.3,504.3 1155.3,495.8 1159.7,504.5 1126.7,513.0" fill="#000080"/><polygon points="1150.0,491.9 1152.9,491.2 1164.7,514.2 1161.7,515.0" fill="#9dcb5a"/><polygon points="1119.9,499.7 1152.9,491.2 1155.7,496.7 1122.8,505.2" fill="#3c4d1e"/><line x1="1152.9" y1="491.2" x2="1164.7" y2="514.2" stroke="#3c4d1e" stroke-width="0.9"/><line x1="1114.7" y1="497.5" x2="1154.9" y2="487.1" stroke="#3c4d1e" stroke-width="0.9"/><polygon points="605.1,664.6 645.3,654.2 659.8,682.7 619.6,693.0" fill="#9dcb5a"/><polygon points="610.3,666.8 643.3,658.3 655.0,681.3 622.1,689.8" fill="#ffffe5"/><polygon points="640.3,659.1 643.3,658.3 655.0,681.3 652.1,682.1" fill="#9dcb5a"/><polygon points="610.3,666.8 643.3,658.3 646.1,663.8 613.1,672.3" fill="#3c4d1e"/><line x1="643.3" y1="658.3" x2="655.0" y2="681.3" stroke="#3c4d1e" stroke-width="0.9"/><line x1="605.1" y1="664.6" x2="645.3" y2="654.2" stroke="#3c4d1e" stroke-width="0.9"/><polygon points="660.7,650.3 700.9,639.9 715.4,668.4 675.2,678.7" fill="#9dcb5a"/><polygon points="665.9,652.5 698.9,644.0 710.6,667.0 677.7,675.5" fill="#ffffe5"/><polygon points="695.9,644.8 698.9,644.0 710.6,667.0 707.7,667.8" fill="#9dcb5a"/><polygon points="665.9,652.5 698.9,644.0 701.7,649.5 668.7,658.0" fill="#3c4d1e"/><line x1="698.9" y1="644.0" x2="710.6" y2="667.0" stroke="#3c4d1e" stroke-width="0.9"/><line x1="660.7" y1="650.3" x2="700.9" y2="639.9" stroke="#3c4d1e" stroke-width="0.9"/><polygon points="709.8,637.7 750.0,627.3 764.5,655.7 724.3,666.1" fill="#9dcb5a"/><polygon points="715.0,639.9 748.0,631.4 759.7,654.4 726.8,662.9" fill="#ffffe5"/><polygon points="745.0,632.1 748.0,631.4 759.7,654.4 756.8,655.1" fill="#9dcb5a"/><polygon points="715.0,639.9 748.0,631.4 750.8,636.9 717.8,645.4" fill="#3c4d1e"/><line x1="748.0" y1="631.4" x2="759.7" y2="654.4" stroke="#3c4d1e" stroke-width="0.9"/><line x1="709.8" y1="637.7" x2="750.0" y2="627.3" stroke="#3c4d1e" stroke-width="0.9"/><polygon points="758.9,625.0 799.1,614.7 813.6,643.1 773.4,653.4" fill="#9dcb5a"/><polygon points="764.1,627.2 797.1,618.7 808.8,641.8 775.9,650.2" fill="#ffffe5"/><polygon points="794.1,619.5 797.1,618.7 808.8,641.8 805.9,642.5" fill="#9dcb5a"/><polygon points="764.1,627.2 797.1,618.7 799.9,624.3 766.9,632.7" fill="#3c4d1e"/><line x1="797.1" y1="618.7" x2="808.8" y2="641.8" stroke="#3c4d1e" stroke-width="0.9"/><line x1="758.9" y1="625.0" x2="799.1" y2="614.7" stroke="#3c4d1e" stroke-width="0.9"/><polygon points="808.0,612.4 848.2,602.0 862.7,630.5 822.5,640.8" fill="#9dcb5a"/><polygon points="813.2,614.6 846.2,606.1 857.9,629.1 824.9,637.6" fill="#ffffe5"/><polygon points="843.2,606.9 846.2,606.1 857.9,629.1 855.0,629.9" fill="#9dcb5a"/><polygon points="813.2,614.6 846.2,606.1 849.0,611.6 816.0,620.1" fill="#3c4d1e"/><line x1="846.2" y1="606.1" x2="857.9" y2="629.1" stroke="#3c4d1e" stroke-width="0.9"/><line x1="808.0" y1="612.4" x2="848.2" y2="602.0" stroke="#3c4d1e" stroke-width="0.9"/><polygon points="932.8,580.3 973.0,569.9 987.5,598.3 947.3,608.7" fill="#9dcb5a"/><polygon points="938.0,582.5 971.0,574.0 982.7,597.0 949.8,605.5" fill="#ffffe5"/><polygon points="968.0,574.8 971.0,574.0 982.7,597.0 979.8,597.8" fill="#9dcb5a"/><polygon points="938.0,582.5 971.0,574.0 973.8,579.5 940.8,588.0" fill="#3c4d1e"/><line x1="971.0" y1="574.0" x2="982.7" y2="597.0" stroke="#3c4d1e" stroke-width="0.9"/><line x1="932.8" y1="580.3" x2="973.0" y2="569.9" stroke="#3c4d1e" stroke-width="0.9"/><polygon points="983.1,567.3 1023.3,557.0 1037.8,585.4 997.6,595.8" fill="#9dcb5a"/><polygon points="988.3,569.5 1021.3,561.1 1033.0,584.1 1000.0,592.6" fill="#ffffe5"/><polygon points="1018.3,561.8 1021.3,561.1 1033.0,584.1 1030.0,584.8" fill="#9dcb5a"/><polygon points="988.3,569.5 1021.3,561.1 1024.1,566.6 991.1,575.1" fill="#3c4d1e"/><line x1="1021.3" y1="561.1" x2="1033.0" y2="584.1" stroke="#3c4d1e" stroke-width="0.9"/><line x1="983.1" y1="567.3" x2="1023.3" y2="557.0" stroke="#3c4d1e" stroke-width="0.9"/><polygon points="1032.8,554.6 1073.0,544.2 1087.5,572.6 1047.3,583.0" fill="#9dcb5a"/><polygon points="1038.0,556.8 1071.0,548.3 1082.7,571.3 1049.7,579.8" fill="#ffffe5"/><polygon points="1068.0,549.0 1071.0,548.3 1082.7,571.3 1079.7,572.0" fill="#9dcb5a"/><polygon points="1038.0,556.8 1071.0,548.3 1073.8,553.8 1040.8,562.3" fill="#3c4d1e"/><line x1="1071.0" y1="548.3" x2="1082.7" y2="571.3" stroke="#3c4d1e" stroke-width="0.9"/><line x1="1032.8" y1="554.6" x2="1073.0" y2="544.2" stroke="#3c4d1e" stroke-width="0.9"/><polygon points="1082.5,541.8 1122.7,531.4 1137.2,559.8 1096.9,570.2" fill="#9dcb5a"/><polygon points="1087.7,544.0 1120.6,535.5 1132.4,558.5 1099.4,567.0" fill="#ffffe5"/><polygon points="1117.7,536.2 1120.6,535.5 1132.4,558.5 1129.4,559.3" fill="#9dcb5a"/><polygon points="1087.7,544.0 1120.6,535.5 1123.5,541.0 1090.5,549.5" fill="#3c4d1e"/><line x1="1120.6" y1="535.5" x2="1132.4" y2="558.5" stroke="#3c4d1e" stroke-width="0.9"/><line x1="1082.5" y1="541.8" x2="1122.7" y2="531.4" stroke="#3c4d1e" stroke-width="0.9"/><polygon points="1132.1,529.0 1172.4,518.6 1186.8,547.1 1146.6,557.4" fill="#9dcb5a"/><polygon points="1137.4,531.2 1170.3,522.7 1182.1,545.7 1149.1,554.2" fill="#ffffe5"/><polygon points="1167.4,523.5 1170.3,522.7 1182.1,545.7 1179.1,546.5" fill="#9dcb5a"/><polygon points="1137.4,531.2 1170.3,522.7 1173.2,528.2 1140.2,536.7" fill="#3c4d1e"/><line x1="1170.3" y1="522.7" x2="1182.1" y2="545.7" stroke="#3c4d1e" stroke-width="0.9"/><line x1="1132.1" y1="529.0" x2="1172.4" y2="518.6" stroke="#3c4d1e" stroke-width="0.9"/><polygon points="614.5,696.2 654.7,685.8 669.2,714.2 629.0,724.6" fill="#9dcb5a"/><polygon points="619.7,698.4 652.7,689.9 664.5,712.9 631.5,721.4" fill="#ffffe5"/><polygon points="649.8,690.7 652.7,689.9 664.5,712.9 661.5,713.7" fill="#9dcb5a"/><polygon points="619.7,698.4 652.7,689.9 655.5,695.4 622.6,703.9" fill="#3c4d1e"/><line x1="652.7" y1="689.9" x2="664.5" y2="712.9" stroke="#3c4d1e" stroke-width="0.9"/><line x1="614.5" y1="696.2" x2="654.7" y2="685.8" stroke="#3c4d1e" stroke-width="0.9"/><polygon points="664.4,683.3 704.6,673.0 719.1,701.4 678.9,711.8" fill="#9dcb5a"/><polygon points="669.6,685.5 702.6,677.1 714.3,700.1 681.3,708.6" fill="#ffffe5"/><polygon points="699.6,677.8 702.6,677.1 714.3,700.1 711.4,700.8" fill="#9dcb5a"/><polygon points="669.6,685.5 702.6,677.1 705.4,682.6 672.4,691.1" fill="#3c4d1e"/><line x1="702.6" y1="677.1" x2="714.3" y2="700.1" stroke="#3c4d1e" stroke-width="0.9"/><line x1="664.4" y1="683.3" x2="704.6" y2="673.0" stroke="#3c4d1e" stroke-width="0.9"/><polygon points="714.3,670.5 754.5,660.2 769.0,688.6 728.7,698.9" fill="#9dcb5a"/><polygon points="719.5,672.7 752.4,664.2 764.2,687.2 731.2,695.7" fill="#ffffe5"/><polygon points="749.5,665.0 752.4,664.2 764.2,687.2 761.2,688.0" fill="#9dcb5a"/><polygon points="719.5,672.7 752.4,664.2 755.3,669.8 722.3,678.2" fill="#3c4d1e"/><line x1="752.4" y1="664.2" x2="764.2" y2="687.2" stroke="#3c4d1e" stroke-width="0.9"/><line x1="714.3" y1="670.5" x2="754.5" y2="660.2" stroke="#3c4d1e" stroke-width="0.9"/><polygon points="764.1,657.7 804.3,647.3 818.8,675.8 778.6,686.1" fill="#9dcb5a"/><polygon points="769.3,659.9 802.3,651.4 814.0,674.4 781.1,682.9" fill="#ffffe5"/><polygon points="799.3,652.2 802.3,651.4 814.0,674.4 811.1,675.2" fill="#9dcb5a"/><polygon points="769.3,659.9 802.3,651.4 805.1,656.9 772.1,665.4" fill="#3c4d1e"/><line x1="802.3" y1="651.4" x2="814.0" y2="674.4" stroke="#3c4d1e" stroke-width="0.9"/><line x1="764.1" y1="657.7" x2="804.3" y2="647.3" stroke="#3c4d1e" stroke-width="0.9"/><polygon points="814.0,644.9 854.2,634.5 868.7,662.9 828.5,673.3" fill="#9dcb5a"/><polygon points="819.2,647.1 852.2,638.6 863.9,661.6 830.9,670.1" fill="#ffffe5"/><polygon points="849.2,639.3 852.2,638.6 863.9,661.6 860.9,662.3" fill="#9dcb5a"/><polygon points="819.2,647.1 852.2,638.6 855.0,644.1 822.0,652.6" fill="#3c4d1e"/><line x1="852.2" y1="638.6" x2="863.9" y2="661.6" stroke="#3c4d1e" stroke-width="0.9"/><line x1="814.0" y1="644.9" x2="854.2" y2="634.5" stroke="#3c4d1e" stroke-width="0.9"/><polygon points="863.8,632.0 904.1,621.7 918.6,650.1 878.3,660.4" fill="#9dcb5a"/><polygon points="869.1,634.2 902.0,625.7 913.8,648.8 880.8,657.2" fill="#ffffe5"/><polygon points="899.1,626.5 902.0,625.7 913.8,648.8 910.8,649.5" fill="#9dcb5a"/><polygon points="869.1,634.2 902.0,625.7 904.9,631.3 871.9,639.7" fill="#3c4d1e"/><line x1="902.0" y1="625.7" x2="913.8" y2="648.8" stroke="#3c4d1e" stroke-width="0.9"/><line x1="863.8" y1="632.0" x2="904.1" y2="621.7" stroke="#3c4d1e" stroke-width="0.9"/><polygon points="913.7,619.2 953.9,608.8 968.4,637.3 928.2,647.6" fill="#9dcb5a"/><polygon points="918.9,621.4 951.9,612.9 963.6,635.9 930.7,644.4" fill="#ffffe5"/><polygon points="948.9,613.7 951.9,612.9 963.6,635.9 960.7,636.7" fill="#9dcb5a"/><polygon points="918.9,621.4 951.9,612.9 954.7,618.4 921.7,626.9" fill="#3c4d1e"/><line x1="951.9" y1="612.9" x2="963.6" y2="635.9" stroke="#3c4d1e" stroke-width="0.9"/><line x1="913.7" y1="619.2" x2="953.9" y2="608.8" stroke="#3c4d1e" stroke-width="0.9"/><polygon points="963.6,606.4 1003.8,596.0 1018.3,624.4 978.1,634.8" fill="#9dcb5a"/><polygon points="968.8,608.6 1001.8,600.1 1013.5,623.1 980.5,631.6" fill="#ffffe5"/><polygon points="998.8,600.8 1001.8,600.1 1013.5,623.1 1010.5,623.9" fill="#9dcb5a"/><polygon points="968.8,608.6 1001.8,600.1 1004.6,605.6 971.6,614.1" fill="#3c4d1e"/><line x1="1001.8" y1="600.1" x2="1013.5" y2="623.1" stroke="#3c4d1e" stroke-width="0.9"/><line x1="963.6" y1="606.4" x2="1003.8" y2="596.0" stroke="#3c4d1e" stroke-width="0.9"/><polygon points="1013.4,593.5 1053.7,583.2 1068.1,611.6 1027.9,622.0" fill="#9dcb5a"/><polygon points="1018.6,595.7 1051.6,587.2 1063.4,610.3 1030.4,618.7" fill="#ffffe5"/><polygon points="1048.7,588.0 1051.6,587.2 1063.4,610.3 1060.4,611.0" fill="#9dcb5a"/><polygon points="1018.6,595.7 1051.6,587.2 1054.4,592.8 1021.5,601.3" fill="#3c4d1e"/><line x1="1051.6" y1="587.2" x2="1063.4" y2="610.3" stroke="#3c4d1e" stroke-width="0.9"/><line x1="1013.4" y1="593.5" x2="1053.7" y2="583.2" stroke="#3c4d1e" stroke-width="0.9"/><polygon points="1063.3,580.7 1103.5,570.4 1118.0,598.8 1077.8,609.1" fill="#9dcb5a"/><polygon points="1068.5,582.9 1101.5,574.4 1113.2,597.4 1080.2,605.9" fill="#ffffe5"/><polygon points="1098.5,575.2 1101.5,574.4 1113.2,597.4 1110.3,598.2" fill="#9dcb5a"/><polygon points="1068.5,582.9 1101.5,574.4 1104.3,579.9 1071.3,588.4" fill="#3c4d1e"/><line x1="1101.5" y1="574.4" x2="1113.2" y2="597.4" stroke="#3c4d1e" stroke-width="0.9"/><line x1="1063.3" y1="580.7" x2="1103.5" y2="570.4" stroke="#3c4d1e" stroke-width="0.9"/><polygon points="1113.2,567.9 1153.4,557.5 1167.9,585.9 1127.6,596.3" fill="#9dcb5a"/><polygon points="1118.4,570.1 1151.4,561.6 1163.1,584.6 1130.1,593.1" fill="#ffffe5"/><polygon points="1148.4,562.3 1151.4,561.6 1163.1,584.6 1160.1,585.4" fill="#9dcb5a"/><polygon points="1118.4,570.1 1151.4,561.6 1154.2,567.1 1121.2,575.6" fill="#3c4d1e"/><line x1="1151.4" y1="561.6" x2="1163.1" y2="584.6" stroke="#3c4d1e" stroke-width="0.9"/><line x1="1113.2" y1="567.9" x2="1153.4" y2="557.5" stroke="#3c4d1e" stroke-width="0.9"/><polygon points="1163.0,555.0 1203.2,544.7 1217.7,573.1 1177.5,583.5" fill="#9dcb5a"/><polygon points="1168.2,557.2 1201.2,548.8 1213.0,571.8 1180.0,580.3" fill="#ffffe5"/><polygon points="1198.2,549.5 1201.2,548.8 1213.0,571.8 1210.0,572.5" fill="#9dcb5a"/><polygon points="1168.2,557.2 1201.2,548.8 1204.0,554.3 1171.1,562.8" fill="#3c4d1e"/><line x1="1201.2" y1="548.8" x2="1213.0" y2="571.8" stroke="#3c4d1e" stroke-width="0.9"/><line x1="1163.0" y1="555.0" x2="1203.2" y2="544.7" stroke="#3c4d1e" stroke-width="0.9"/><polygon points="631.5,728.2 671.8,717.9 686.2,746.3 646.0,756.7" fill="#9dcb5a"/><polygon points="636.8,730.4 669.7,721.9 681.5,745.0 648.5,753.4" fill="#ffffe5"/><polygon points="666.8,722.7 669.7,721.9 681.5,745.0 678.5,745.7" fill="#9dcb5a"/><polygon points="636.8,730.4 669.7,721.9 672.5,727.5 639.6,736.0" fill="#3c4d1e"/><line x1="669.7" y1="721.9" x2="681.5" y2="745.0" stroke="#3c4d1e" stroke-width="0.9"/><line x1="631.5" y1="728.2" x2="671.8" y2="717.9" stroke="#3c4d1e" stroke-width="0.9"/><polygon points="681.4,715.4 721.6,705.1 736.1,733.5 695.9,743.8" fill="#9dcb5a"/><polygon points="686.6,717.6 719.6,709.1 731.3,732.1 698.4,740.6" fill="#ffffe5"/><polygon points="716.6,709.9 719.6,709.1 731.3,732.1 728.4,732.9" fill="#9dcb5a"/><polygon points="686.6,717.6 719.6,709.1 722.4,714.6 689.4,723.1" fill="#3c4d1e"/><line x1="719.6" y1="709.1" x2="731.3" y2="732.1" stroke="#3c4d1e" stroke-width="0.9"/><line x1="681.4" y1="715.4" x2="721.6" y2="705.1" stroke="#3c4d1e" stroke-width="0.9"/><polygon points="731.3,702.6 771.5,692.2 786.0,720.6 745.8,731.0" fill="#9dcb5a"/><polygon points="736.5,704.8 769.5,696.3 781.2,719.3 748.2,727.8" fill="#ffffe5"/><polygon points="766.5,697.0 769.5,696.3 781.2,719.3 778.2,720.1" fill="#9dcb5a"/><polygon points="736.5,704.8 769.5,696.3 772.3,701.8 739.3,710.3" fill="#3c4d1e"/><line x1="769.5" y1="696.3" x2="781.2" y2="719.3" stroke="#3c4d1e" stroke-width="0.9"/><line x1="731.3" y1="702.6" x2="771.5" y2="692.2" stroke="#3c4d1e" stroke-width="0.9"/><polygon points="781.1,689.7 821.3,679.4 835.8,707.8 795.6,718.2" fill="#9dcb5a"/><polygon points="786.3,691.9 819.3,683.5 831.1,706.5 798.1,715.0" fill="#ffffe5"/><polygon points="816.4,684.2 819.3,683.5 831.1,706.5 828.1,707.2" fill="#9dcb5a"/><polygon points="786.3,691.9 819.3,683.5 822.1,689.0 789.2,697.5" fill="#3c4d1e"/><line x1="819.3" y1="683.5" x2="831.1" y2="706.5" stroke="#3c4d1e" stroke-width="0.9"/><line x1="781.1" y1="689.7" x2="821.3" y2="679.4" stroke="#3c4d1e" stroke-width="0.9"/><polygon points="831.0,676.9 871.2,666.6 885.7,695.0 845.5,705.3" fill="#9dcb5a"/><polygon points="836.2,679.1 869.2,670.6 880.9,693.6 847.9,702.1" fill="#ffffe5"/><polygon points="866.2,671.4 869.2,670.6 880.9,693.6 878.0,694.4" fill="#9dcb5a"/><polygon points="836.2,679.1 869.2,670.6 872.0,676.1 839.0,684.6" fill="#3c4d1e"/><line x1="869.2" y1="670.6" x2="880.9" y2="693.6" stroke="#3c4d1e" stroke-width="0.9"/><line x1="831.0" y1="676.9" x2="871.2" y2="666.6" stroke="#3c4d1e" stroke-width="0.9"/><polygon points="880.9,664.1 921.1,653.7 935.6,682.2 895.3,692.5" fill="#9dcb5a"/><polygon points="886.1,666.3 919.1,657.8 930.8,680.8 897.8,689.3" fill="#ffffe5"/><polygon points="916.1,658.6 919.1,657.8 930.8,680.8 927.8,681.6" fill="#9dcb5a"/><polygon points="886.1,666.3 919.1,657.8 921.9,663.3 888.9,671.8" fill="#3c4d1e"/><line x1="919.1" y1="657.8" x2="930.8" y2="680.8" stroke="#3c4d1e" stroke-width="0.9"/><line x1="880.9" y1="664.1" x2="921.1" y2="653.7" stroke="#3c4d1e" stroke-width="0.9"/><polygon points="930.7,651.3 970.9,640.9 985.4,669.3 945.2,679.7" fill="#9dcb5a"/><polygon points="935.9,653.4 968.9,645.0 980.7,668.0 947.7,676.5" fill="#ffffe5"/><polygon points="965.9,645.7 968.9,645.0 980.7,668.0 977.7,668.7" fill="#9dcb5a"/><polygon points="935.9,653.4 968.9,645.0 971.7,650.5 938.7,659.0" fill="#3c4d1e"/><line x1="968.9" y1="645.0" x2="980.7" y2="668.0" stroke="#3c4d1e" stroke-width="0.9"/><line x1="930.7" y1="651.3" x2="970.9" y2="640.9" stroke="#3c4d1e" stroke-width="0.9"/><polygon points="980.6,638.4 1020.8,628.1 1035.3,656.5 995.1,666.8" fill="#9dcb5a"/><polygon points="985.8,640.6 1018.8,632.1 1030.5,655.1 997.5,663.6" fill="#ffffe5"/><polygon points="1015.8,632.9 1018.8,632.1 1030.5,655.1 1027.5,655.9" fill="#9dcb5a"/><polygon points="985.8,640.6 1018.8,632.1 1021.6,637.7 988.6,646.1" fill="#3c4d1e"/><line x1="1018.8" y1="632.1" x2="1030.5" y2="655.1" stroke="#3c4d1e" stroke-width="0.9"/><line x1="980.6" y1="638.4" x2="1020.8" y2="628.1" stroke="#3c4d1e" stroke-width="0.9"/><polygon points="1030.4,625.6 1070.7,615.2 1085.2,643.7 1044.9,654.0" fill="#9dcb5a"/><polygon points="1035.7,627.8 1068.6,619.3 1080.4,642.3 1047.4,650.8" fill="#ffffe5"/><polygon points="1065.7,620.1 1068.6,619.3 1080.4,642.3 1077.4,643.1" fill="#9dcb5a"/><polygon points="1035.7,627.8 1068.6,619.3 1071.5,624.8 1038.5,633.3" fill="#3c4d1e"/><line x1="1068.6" y1="619.3" x2="1080.4" y2="642.3" stroke="#3c4d1e" stroke-width="0.9"/><line x1="1030.4" y1="625.6" x2="1070.7" y2="615.2" stroke="#3c4d1e" stroke-width="0.9"/><polygon points="1080.3,612.8 1120.5,602.4 1135.0,630.8 1094.8,641.2" fill="#9dcb5a"/><polygon points="1085.5,615.0 1118.5,606.5 1130.2,629.5 1097.3,638.0" fill="#ffffe5"/><polygon points="1115.5,607.2 1118.5,606.5 1130.2,629.5 1127.3,630.3" fill="#9dcb5a"/><polygon points="1085.5,615.0 1118.5,606.5 1121.3,612.0 1088.3,620.5" fill="#3c4d1e"/><line x1="1118.5" y1="606.5" x2="1130.2" y2="629.5" stroke="#3c4d1e" stroke-width="0.9"/><line x1="1080.3" y1="612.8" x2="1120.5" y2="602.4" stroke="#3c4d1e" stroke-width="0.9"/><polygon points="1130.2,599.9 1170.4,589.6 1184.9,618.0 1144.7,628.3" fill="#9dcb5a"/><polygon points="1135.4,602.1 1168.4,593.6 1180.1,616.7 1147.1,625.1" fill="#ffffe5"/><polygon points="1165.4,594.4 1168.4,593.6 1180.1,616.7 1177.1,617.4" fill="#9dcb5a"/><polygon points="1135.4,602.1 1168.4,593.6 1171.2,599.2 1138.2,607.6" fill="#3c4d1e"/><line x1="1168.4" y1="593.6" x2="1180.1" y2="616.7" stroke="#3c4d1e" stroke-width="0.9"/><line x1="1130.2" y1="599.9" x2="1170.4" y2="589.6" stroke="#3c4d1e" stroke-width="0.9"/><polygon points="1180.0,587.1 1220.3,576.7 1234.7,605.2 1194.5,615.5" fill="#9dcb5a"/><polygon points="1185.2,589.3 1218.2,580.8 1230.0,603.8 1197.0,612.3" fill="#ffffe5"/><polygon points="1215.3,581.6 1218.2,580.8 1230.0,603.8 1227.0,604.6" fill="#9dcb5a"/><polygon points="1185.2,589.3 1218.2,580.8 1221.0,586.3 1188.1,594.8" fill="#3c4d1e"/><line x1="1218.2" y1="580.8" x2="1230.0" y2="603.8" stroke="#3c4d1e" stroke-width="0.9"/><line x1="1180.0" y1="587.1" x2="1220.3" y2="576.7" stroke="#3c4d1e" stroke-width="0.9"/><polygon points="848.5,564.5 873.3,558.1 904.8,619.8 879.9,626.2" fill="#ff0000"/><line x1="848.5" y1="564.5" x2="873.3" y2="558.1" stroke="#008000" stroke-width="1.5"/><polygon points="852.2,598.0 864.0,595.0 881.2,628.7 869.4,631.7" fill="#0000ff"/><polygon points="914.6,582.7 925.3,579.9 941.9,612.5 931.2,615.3" fill="#0000ff"/></svg>
</div>
<div class="abs" id="gap"></div>
<div class="abs" id="console"><div class="abs" id="ctext">
<div class="cl" style="top:0px">Saved design &#x27;D:/VmWare/SharedFolder/SFR_priv/SCAD/SCAD/hypernano.scad&#x27;.</div>
<div class="cl" style="top:13px">Loaded design &#x27;D:/VmWare/SharedFolder/SFR_priv/SCAD/SCAD/hypernano.scad&#x27;.</div>
<div class="cl" style="top:26px">Module cache size: 3 modules</div>
<div class="cl" style="top:39px">Compiling design (CSG Tree generation)...</div>
<div class="cl" style="top:52px">Compiling design (CSG Products generation)...</div>
<div class="cl" style="top:65px">PolySets in cache: 749</div>
<div class="cl" style="top:78px">PolySet cache size in bytes: 12019776</div>
<div class="cl" style="top:91px">CGAL Polyhedrons in cache: 1612</div>
<div class="cl" style="top:104px">CGAL cache size in bytes: 760350344</div>
<div class="cl" style="top:117px">Compiling design (CSG Products normalization)...</div>
<div class="cl" style="top:130px">Compiling background (31 CSG Trees)...</div>
<div class="cl" style="top:143px">Normalized CSG tree has 720 elements</div>
<div class="cl" style="top:156px">CSG generation finished.</div>
<div class="cl" style="top:169px">Total rendering time: 0 hours, 0 minutes, 0 seconds</div>
</div></div>
<div class="abs" id="status"><div class="abs" id="stext">Viewport: translate = [ 13.57 -4.74 -6.83 ], rotate = [ 45.20 0.00 339.90 ], distance = 1593.32</div>
<div class="abs" style="left:469px;top:2px;width:1px;height:16px;background:#d0d0d0"></div>
<svg class="abs" style="left:1224px;top:9px" width="12" height="12"><g fill="#ffffff"><rect x="9" y="2" width="1.5" height="1.5"/><rect x="6" y="5" width="1.5" height="1.5"/><rect x="9" y="5" width="1.5" height="1.5"/><rect x="3" y="8" width="1.5" height="1.5"/><rect x="6" y="8" width="1.5" height="1.5"/><rect x="9" y="8" width="1.5" height="1.5"/></g><g fill="#707070"><rect x="8" y="1" width="1.5" height="1.5"/><rect x="5" y="4" width="1.5" height="1.5"/><rect x="8" y="4" width="1.5" height="1.5"/><rect x="2" y="7" width="1.5" height="1.5"/><rect x="5" y="7" width="1.5" height="1.5"/><rect x="8" y="7" width="1.5" height="1.5"/></g></svg>
</div>
</body></html>
